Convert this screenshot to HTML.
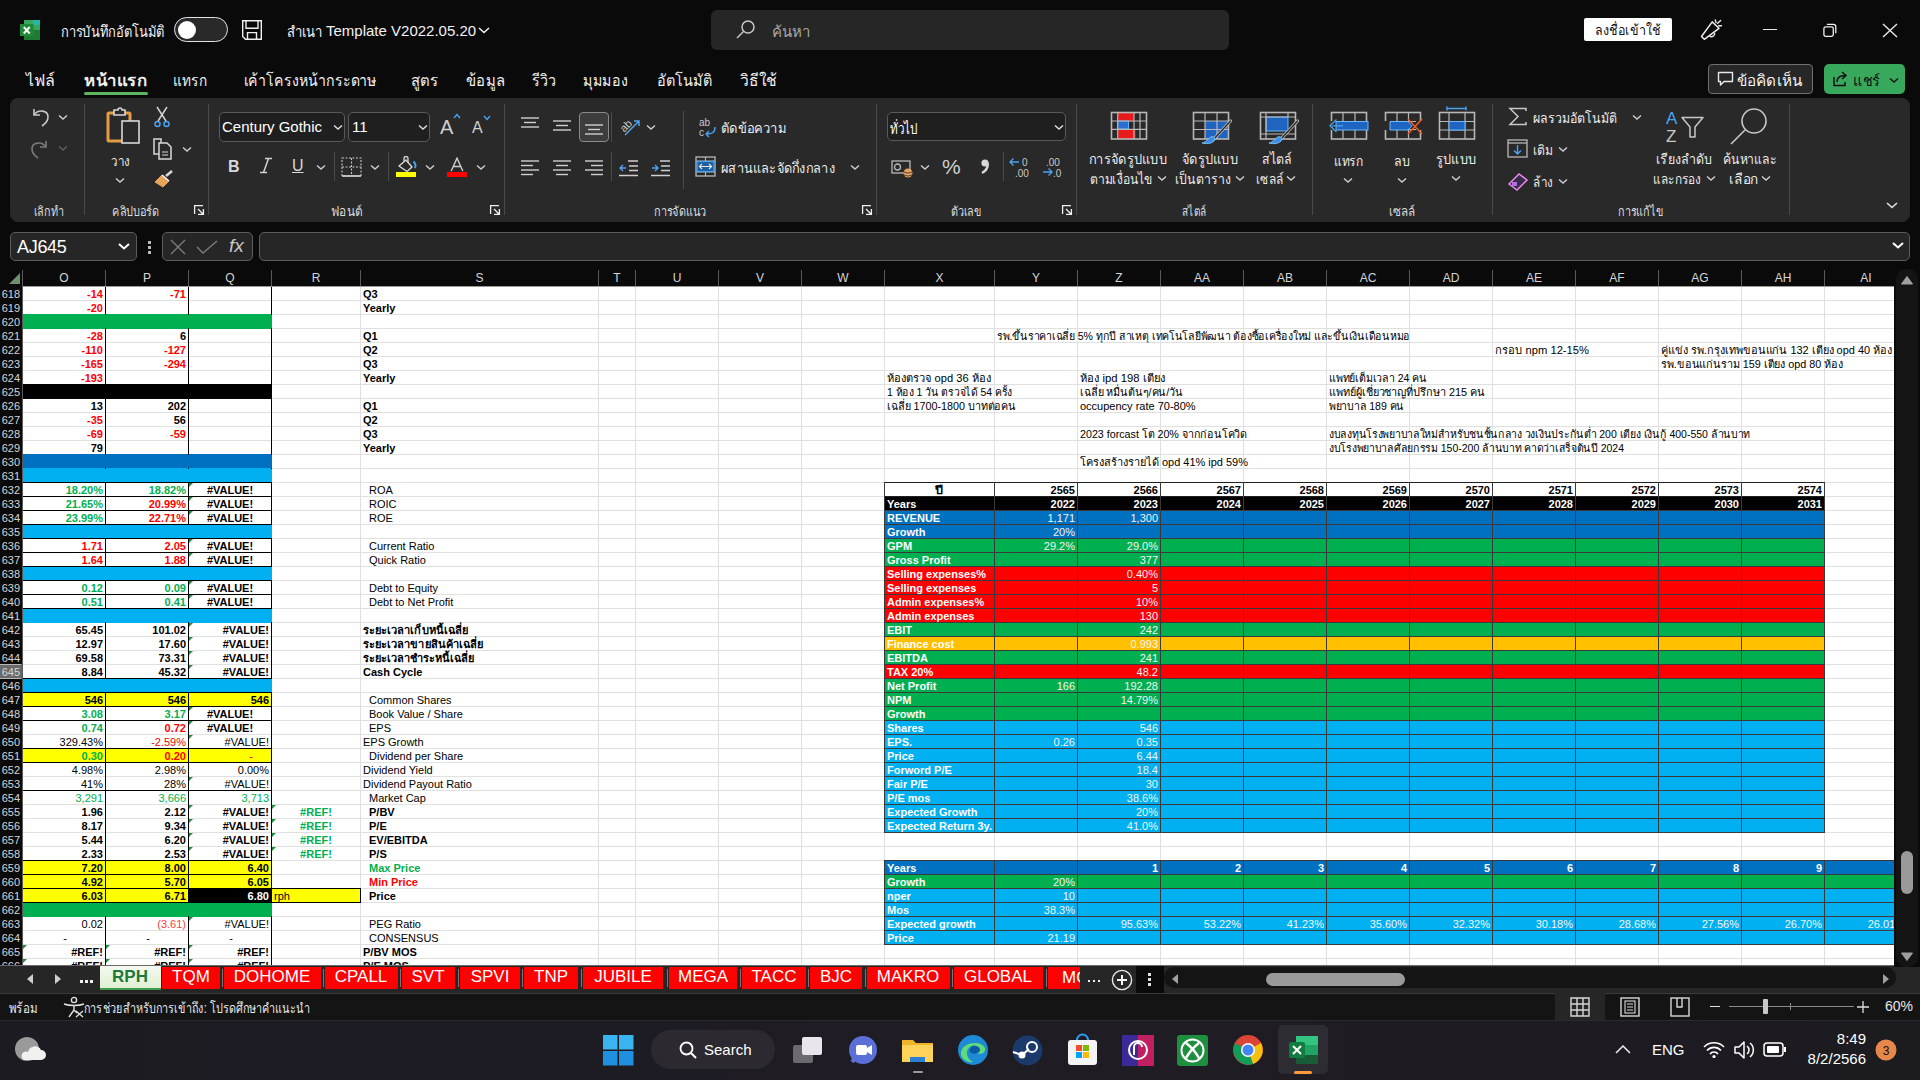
<!DOCTYPE html><html><head><meta charset="utf-8"><style>
*{margin:0;padding:0;box-sizing:border-box}
html,body{width:1920px;height:1080px;overflow:hidden;background:#0a0a0a;font-family:"Liberation Sans", sans-serif;position:relative}
.a{position:absolute}
.t{position:absolute;height:14px;line-height:14px;white-space:nowrap;font-size:11px}
#grid{position:absolute;left:0;top:0;width:1894px;height:965px;overflow:hidden;clip-path:inset(287px 0 0 23px)}
.hd{position:absolute;top:270px;height:17px;line-height:17px;text-align:center;color:#d6d6d6;font-size:12px}
.rn{position:absolute;left:0;width:21px;height:14px;line-height:14px;text-align:right;color:#d6d6d6;font-size:11px;padding-right:1px}

</style></head><body>
<div class="a" style="left:23px;top:287px;width:1871px;height:678px;background:#fff repeating-linear-gradient(to bottom, transparent 0, transparent 13px, #e0e0e0 13px, #e0e0e0 14px)"></div>
<div id="grid"><div style="position:absolute;left:105px;top:287px;width:1px;height:678px;background:#e0e0e0"></div><div style="position:absolute;left:188px;top:287px;width:1px;height:678px;background:#e0e0e0"></div><div style="position:absolute;left:271px;top:287px;width:1px;height:678px;background:#e0e0e0"></div><div style="position:absolute;left:360px;top:287px;width:1px;height:678px;background:#e0e0e0"></div><div style="position:absolute;left:598px;top:287px;width:1px;height:678px;background:#e0e0e0"></div><div style="position:absolute;left:635px;top:287px;width:1px;height:678px;background:#e0e0e0"></div><div style="position:absolute;left:718px;top:287px;width:1px;height:678px;background:#e0e0e0"></div><div style="position:absolute;left:801px;top:287px;width:1px;height:678px;background:#e0e0e0"></div><div style="position:absolute;left:884px;top:287px;width:1px;height:678px;background:#e0e0e0"></div><div style="position:absolute;left:994px;top:287px;width:1px;height:678px;background:#e0e0e0"></div><div style="position:absolute;left:1077px;top:287px;width:1px;height:678px;background:#e0e0e0"></div><div style="position:absolute;left:1160px;top:287px;width:1px;height:678px;background:#e0e0e0"></div><div style="position:absolute;left:1243px;top:287px;width:1px;height:678px;background:#e0e0e0"></div><div style="position:absolute;left:1326px;top:287px;width:1px;height:678px;background:#e0e0e0"></div><div style="position:absolute;left:1409px;top:287px;width:1px;height:678px;background:#e0e0e0"></div><div style="position:absolute;left:1492px;top:287px;width:1px;height:678px;background:#e0e0e0"></div><div style="position:absolute;left:1575px;top:287px;width:1px;height:678px;background:#e0e0e0"></div><div style="position:absolute;left:1658px;top:287px;width:1px;height:678px;background:#e0e0e0"></div><div style="position:absolute;left:1741px;top:287px;width:1px;height:678px;background:#e0e0e0"></div><div style="position:absolute;left:1824px;top:287px;width:1px;height:678px;background:#e0e0e0"></div><div style="position:absolute;left:23px;top:314px;width:249px;height:15px;background:#00b050;"></div><div style="position:absolute;left:23px;top:384px;width:249px;height:15px;background:#000000;"></div><div style="position:absolute;left:23px;top:454px;width:249px;height:15px;background:#0070c0;"></div><div style="position:absolute;left:23px;top:468px;width:249px;height:15px;background:#00b0f0;"></div><div style="position:absolute;left:23px;top:524px;width:249px;height:15px;background:#00b0f0;"></div><div style="position:absolute;left:23px;top:566px;width:249px;height:15px;background:#00b0f0;"></div><div style="position:absolute;left:23px;top:608px;width:249px;height:15px;background:#00b0f0;"></div><div style="position:absolute;left:23px;top:678px;width:249px;height:15px;background:#00b0f0;"></div><div style="position:absolute;left:23px;top:692px;width:249px;height:15px;background:#ffff00;"></div><div style="position:absolute;left:23px;top:748px;width:249px;height:15px;background:#ffff00;"></div><div style="position:absolute;left:23px;top:860px;width:249px;height:29px;background:#ffff00;"></div><div style="position:absolute;left:23px;top:888px;width:166px;height:15px;background:#ffff00;"></div><div style="position:absolute;left:188px;top:888px;width:84px;height:15px;background:#000000;"></div><div style="position:absolute;left:271px;top:888px;width:90px;height:15px;background:#ffff00;"></div><div style="position:absolute;left:23px;top:902px;width:249px;height:15px;background:#00b050;"></div><div style="position:absolute;left:22px;top:482px;width:250px;height:1px;background:#000000;"></div><div style="position:absolute;left:22px;top:496px;width:250px;height:1px;background:#000000;"></div><div style="position:absolute;left:22px;top:510px;width:250px;height:1px;background:#000000;"></div><div style="position:absolute;left:22px;top:524px;width:250px;height:1px;background:#000000;"></div><div style="position:absolute;left:22px;top:538px;width:250px;height:1px;background:#000000;"></div><div style="position:absolute;left:22px;top:552px;width:250px;height:1px;background:#000000;"></div><div style="position:absolute;left:22px;top:566px;width:250px;height:1px;background:#000000;"></div><div style="position:absolute;left:22px;top:580px;width:250px;height:1px;background:#000000;"></div><div style="position:absolute;left:22px;top:594px;width:250px;height:1px;background:#000000;"></div><div style="position:absolute;left:22px;top:608px;width:250px;height:1px;background:#000000;"></div><div style="position:absolute;left:22px;top:678px;width:250px;height:1px;background:#000000;"></div><div style="position:absolute;left:22px;top:692px;width:250px;height:1px;background:#000000;"></div><div style="position:absolute;left:22px;top:706px;width:250px;height:1px;background:#000000;"></div><div style="position:absolute;left:22px;top:720px;width:250px;height:1px;background:#000000;"></div><div style="position:absolute;left:22px;top:748px;width:250px;height:1px;background:#000000;"></div><div style="position:absolute;left:22px;top:762px;width:250px;height:1px;background:#000000;"></div><div style="position:absolute;left:22px;top:790px;width:250px;height:1px;background:#000000;"></div><div style="position:absolute;left:22px;top:860px;width:250px;height:1px;background:#000000;"></div><div style="position:absolute;left:22px;top:874px;width:250px;height:1px;background:#000000;"></div><div style="position:absolute;left:22px;top:888px;width:250px;height:1px;background:#000000;"></div><div style="position:absolute;left:22px;top:902px;width:250px;height:1px;background:#000000;"></div><div style="position:absolute;left:271px;top:888px;width:90px;height:1px;background:#000000;"></div><div style="position:absolute;left:271px;top:902px;width:90px;height:1px;background:#000000;"></div><div style="position:absolute;left:105px;top:286px;width:1px;height:687px;background:#000000;"></div><div style="position:absolute;left:188px;top:286px;width:1px;height:687px;background:#000000;"></div><div style="position:absolute;left:271px;top:286px;width:1px;height:687px;background:#000000;"></div><div style="position:absolute;left:360px;top:888px;width:1px;height:15px;background:#000000;"></div><div style="position:absolute;left:23px;top:315px;width:249px;height:13px;background:#00b050;"></div><div style="position:absolute;left:23px;top:385px;width:249px;height:13px;background:#000000;"></div><div style="position:absolute;left:23px;top:455px;width:249px;height:13px;background:#0070c0;"></div><div style="position:absolute;left:23px;top:469px;width:249px;height:13px;background:#00b0f0;"></div><div style="position:absolute;left:23px;top:525px;width:249px;height:13px;background:#00b0f0;"></div><div style="position:absolute;left:23px;top:567px;width:249px;height:13px;background:#00b0f0;"></div><div style="position:absolute;left:23px;top:609px;width:249px;height:13px;background:#00b0f0;"></div><div style="position:absolute;left:23px;top:679px;width:249px;height:13px;background:#00b0f0;"></div><div style="position:absolute;left:23px;top:903px;width:249px;height:13px;background:#00b050;"></div><div class="t" style="left:23px;width:80px;text-align:right;top:287px;color:#ff0000;font-weight:bold;font-size:11px;">-14</div><div class="t" style="left:106px;width:80px;text-align:right;top:287px;color:#ff0000;font-weight:bold;font-size:11px;">-71</div><div class="t" style="left:23px;width:80px;text-align:right;top:301px;color:#ff0000;font-weight:bold;font-size:11px;">-20</div><div class="t" style="left:23px;width:80px;text-align:right;top:329px;color:#ff0000;font-weight:bold;font-size:11px;">-28</div><div class="t" style="left:106px;width:80px;text-align:right;top:329px;color:#000;font-weight:bold;font-size:11px;">6</div><div class="t" style="left:23px;width:80px;text-align:right;top:343px;color:#ff0000;font-weight:bold;font-size:11px;">-110</div><div class="t" style="left:106px;width:80px;text-align:right;top:343px;color:#ff0000;font-weight:bold;font-size:11px;">-127</div><div class="t" style="left:23px;width:80px;text-align:right;top:357px;color:#ff0000;font-weight:bold;font-size:11px;">-165</div><div class="t" style="left:106px;width:80px;text-align:right;top:357px;color:#ff0000;font-weight:bold;font-size:11px;">-294</div><div class="t" style="left:23px;width:80px;text-align:right;top:371px;color:#ff0000;font-weight:bold;font-size:11px;">-193</div><div class="t" style="left:23px;width:80px;text-align:right;top:399px;color:#000;font-weight:bold;font-size:11px;">13</div><div class="t" style="left:106px;width:80px;text-align:right;top:399px;color:#000;font-weight:bold;font-size:11px;">202</div><div class="t" style="left:23px;width:80px;text-align:right;top:413px;color:#ff0000;font-weight:bold;font-size:11px;">-35</div><div class="t" style="left:106px;width:80px;text-align:right;top:413px;color:#000;font-weight:bold;font-size:11px;">56</div><div class="t" style="left:23px;width:80px;text-align:right;top:427px;color:#ff0000;font-weight:bold;font-size:11px;">-69</div><div class="t" style="left:106px;width:80px;text-align:right;top:427px;color:#ff0000;font-weight:bold;font-size:11px;">-59</div><div class="t" style="left:23px;width:80px;text-align:right;top:441px;color:#000;font-weight:bold;font-size:11px;">79</div><div class="t" style="left:23px;width:80px;text-align:right;top:483px;color:#00b050;font-weight:bold;font-size:11px;">18.20%</div><div class="t" style="left:106px;width:80px;text-align:right;top:483px;color:#00b050;font-weight:bold;font-size:11px;">18.82%</div><div class="t" style="left:189px;width:82px;text-align:center;top:483px;color:#000;font-weight:bold;font-size:11px;">#VALUE!</div><div class="t" style="left:23px;width:80px;text-align:right;top:497px;color:#00b050;font-weight:bold;font-size:11px;">21.65%</div><div class="t" style="left:106px;width:80px;text-align:right;top:497px;color:#ff0000;font-weight:bold;font-size:11px;">20.99%</div><div class="t" style="left:189px;width:82px;text-align:center;top:497px;color:#000;font-weight:bold;font-size:11px;">#VALUE!</div><div class="t" style="left:23px;width:80px;text-align:right;top:511px;color:#00b050;font-weight:bold;font-size:11px;">23.99%</div><div class="t" style="left:106px;width:80px;text-align:right;top:511px;color:#ff0000;font-weight:bold;font-size:11px;">22.71%</div><div class="t" style="left:189px;width:82px;text-align:center;top:511px;color:#000;font-weight:bold;font-size:11px;">#VALUE!</div><div class="t" style="left:23px;width:80px;text-align:right;top:539px;color:#ff0000;font-weight:bold;font-size:11px;">1.71</div><div class="t" style="left:106px;width:80px;text-align:right;top:539px;color:#ff0000;font-weight:bold;font-size:11px;">2.05</div><div class="t" style="left:189px;width:82px;text-align:center;top:539px;color:#000;font-weight:bold;font-size:11px;">#VALUE!</div><div class="t" style="left:23px;width:80px;text-align:right;top:553px;color:#ff0000;font-weight:bold;font-size:11px;">1.64</div><div class="t" style="left:106px;width:80px;text-align:right;top:553px;color:#ff0000;font-weight:bold;font-size:11px;">1.88</div><div class="t" style="left:189px;width:82px;text-align:center;top:553px;color:#000;font-weight:bold;font-size:11px;">#VALUE!</div><div class="t" style="left:23px;width:80px;text-align:right;top:581px;color:#00b050;font-weight:bold;font-size:11px;">0.12</div><div class="t" style="left:106px;width:80px;text-align:right;top:581px;color:#00b050;font-weight:bold;font-size:11px;">0.09</div><div class="t" style="left:189px;width:82px;text-align:center;top:581px;color:#000;font-weight:bold;font-size:11px;">#VALUE!</div><div class="t" style="left:23px;width:80px;text-align:right;top:595px;color:#00b050;font-weight:bold;font-size:11px;">0.51</div><div class="t" style="left:106px;width:80px;text-align:right;top:595px;color:#00b050;font-weight:bold;font-size:11px;">0.41</div><div class="t" style="left:189px;width:82px;text-align:center;top:595px;color:#000;font-weight:bold;font-size:11px;">#VALUE!</div><div class="t" style="left:23px;width:80px;text-align:right;top:623px;color:#000;font-weight:bold;font-size:11px;">65.45</div><div class="t" style="left:106px;width:80px;text-align:right;top:623px;color:#000;font-weight:bold;font-size:11px;">101.02</div><div class="t" style="left:189px;width:80px;text-align:right;top:623px;color:#000;font-weight:bold;font-size:11px;">#VALUE!</div><div class="t" style="left:23px;width:80px;text-align:right;top:637px;color:#000;font-weight:bold;font-size:11px;">12.97</div><div class="t" style="left:106px;width:80px;text-align:right;top:637px;color:#000;font-weight:bold;font-size:11px;">17.60</div><div class="t" style="left:189px;width:80px;text-align:right;top:637px;color:#000;font-weight:bold;font-size:11px;">#VALUE!</div><div class="t" style="left:23px;width:80px;text-align:right;top:651px;color:#000;font-weight:bold;font-size:11px;">69.58</div><div class="t" style="left:106px;width:80px;text-align:right;top:651px;color:#000;font-weight:bold;font-size:11px;">73.31</div><div class="t" style="left:189px;width:80px;text-align:right;top:651px;color:#000;font-weight:bold;font-size:11px;">#VALUE!</div><div class="t" style="left:23px;width:80px;text-align:right;top:665px;color:#000;font-weight:bold;font-size:11px;">8.84</div><div class="t" style="left:106px;width:80px;text-align:right;top:665px;color:#000;font-weight:bold;font-size:11px;">45.32</div><div class="t" style="left:189px;width:80px;text-align:right;top:665px;color:#000;font-weight:bold;font-size:11px;">#VALUE!</div><div class="t" style="left:23px;width:80px;text-align:right;top:693px;color:#000;font-weight:bold;font-size:11px;">546</div><div class="t" style="left:106px;width:80px;text-align:right;top:693px;color:#000;font-weight:bold;font-size:11px;">546</div><div class="t" style="left:189px;width:80px;text-align:right;top:693px;color:#000;font-weight:bold;font-size:11px;">546</div><div class="t" style="left:23px;width:80px;text-align:right;top:707px;color:#00b050;font-weight:bold;font-size:11px;">3.08</div><div class="t" style="left:106px;width:80px;text-align:right;top:707px;color:#00b050;font-weight:bold;font-size:11px;">3.17</div><div class="t" style="left:189px;width:82px;text-align:center;top:707px;color:#000;font-weight:bold;font-size:11px;">#VALUE!</div><div class="t" style="left:23px;width:80px;text-align:right;top:721px;color:#00b050;font-weight:bold;font-size:11px;">0.74</div><div class="t" style="left:106px;width:80px;text-align:right;top:721px;color:#ff0000;font-weight:bold;font-size:11px;">0.72</div><div class="t" style="left:189px;width:82px;text-align:center;top:721px;color:#000;font-weight:bold;font-size:11px;">#VALUE!</div><div class="t" style="left:23px;width:80px;text-align:right;top:735px;color:#000;font-weight:normal;font-size:11px;">329.43%</div><div class="t" style="left:106px;width:80px;text-align:right;top:735px;color:#ff0000;font-weight:normal;font-size:11px;">-2.59%</div><div class="t" style="left:189px;width:80px;text-align:right;top:735px;color:#000;font-weight:normal;font-size:11px;">#VALUE!</div><div class="t" style="left:23px;width:80px;text-align:right;top:749px;color:#00b050;font-weight:bold;font-size:11px;">0.30</div><div class="t" style="left:106px;width:80px;text-align:right;top:749px;color:#ff0000;font-weight:bold;font-size:11px;">0.20</div><div class="t" style="left:189px;width:64px;text-align:right;top:749px;color:#ff0000;font-weight:normal;font-size:11px;">-</div><div class="t" style="left:23px;width:80px;text-align:right;top:763px;color:#000;font-weight:normal;font-size:11px;">4.98%</div><div class="t" style="left:106px;width:80px;text-align:right;top:763px;color:#000;font-weight:normal;font-size:11px;">2.98%</div><div class="t" style="left:189px;width:80px;text-align:right;top:763px;color:#000;font-weight:normal;font-size:11px;">0.00%</div><div class="t" style="left:23px;width:80px;text-align:right;top:777px;color:#000;font-weight:normal;font-size:11px;">41%</div><div class="t" style="left:106px;width:80px;text-align:right;top:777px;color:#000;font-weight:normal;font-size:11px;">28%</div><div class="t" style="left:189px;width:80px;text-align:right;top:777px;color:#000;font-weight:normal;font-size:11px;">#VALUE!</div><div class="t" style="left:23px;width:80px;text-align:right;top:791px;color:#00b050;font-weight:normal;font-size:11px;">3,291</div><div class="t" style="left:106px;width:80px;text-align:right;top:791px;color:#00b050;font-weight:normal;font-size:11px;">3,666</div><div class="t" style="left:189px;width:80px;text-align:right;top:791px;color:#00b050;font-weight:normal;font-size:11px;">3,713</div><div class="t" style="left:23px;width:80px;text-align:right;top:805px;color:#000;font-weight:bold;font-size:11px;">1.96</div><div class="t" style="left:106px;width:80px;text-align:right;top:805px;color:#000;font-weight:bold;font-size:11px;">2.12</div><div class="t" style="left:189px;width:80px;text-align:right;top:805px;color:#000;font-weight:bold;font-size:11px;">#VALUE!</div><div class="t" style="left:272px;width:88px;text-align:center;top:805px;color:#00b050;font-weight:bold;font-size:11px;">#REF!</div><div class="t" style="left:23px;width:80px;text-align:right;top:819px;color:#000;font-weight:bold;font-size:11px;">8.17</div><div class="t" style="left:106px;width:80px;text-align:right;top:819px;color:#000;font-weight:bold;font-size:11px;">9.34</div><div class="t" style="left:189px;width:80px;text-align:right;top:819px;color:#000;font-weight:bold;font-size:11px;">#VALUE!</div><div class="t" style="left:272px;width:88px;text-align:center;top:819px;color:#00b050;font-weight:bold;font-size:11px;">#REF!</div><div class="t" style="left:23px;width:80px;text-align:right;top:833px;color:#000;font-weight:bold;font-size:11px;">5.44</div><div class="t" style="left:106px;width:80px;text-align:right;top:833px;color:#000;font-weight:bold;font-size:11px;">6.20</div><div class="t" style="left:189px;width:80px;text-align:right;top:833px;color:#000;font-weight:bold;font-size:11px;">#VALUE!</div><div class="t" style="left:272px;width:88px;text-align:center;top:833px;color:#00b050;font-weight:bold;font-size:11px;">#REF!</div><div class="t" style="left:23px;width:80px;text-align:right;top:847px;color:#000;font-weight:bold;font-size:11px;">2.33</div><div class="t" style="left:106px;width:80px;text-align:right;top:847px;color:#000;font-weight:bold;font-size:11px;">2.53</div><div class="t" style="left:189px;width:80px;text-align:right;top:847px;color:#000;font-weight:bold;font-size:11px;">#VALUE!</div><div class="t" style="left:272px;width:88px;text-align:center;top:847px;color:#00b050;font-weight:bold;font-size:11px;">#REF!</div><div class="t" style="left:23px;width:80px;text-align:right;top:861px;color:#000;font-weight:bold;font-size:11px;">7.20</div><div class="t" style="left:106px;width:80px;text-align:right;top:861px;color:#000;font-weight:bold;font-size:11px;">8.00</div><div class="t" style="left:189px;width:80px;text-align:right;top:861px;color:#000;font-weight:bold;font-size:11px;">6.40</div><div class="t" style="left:23px;width:80px;text-align:right;top:875px;color:#000;font-weight:bold;font-size:11px;">4.92</div><div class="t" style="left:106px;width:80px;text-align:right;top:875px;color:#000;font-weight:bold;font-size:11px;">5.70</div><div class="t" style="left:189px;width:80px;text-align:right;top:875px;color:#000;font-weight:bold;font-size:11px;">6.05</div><div class="t" style="left:23px;width:80px;text-align:right;top:889px;color:#000;font-weight:bold;font-size:11px;">6.03</div><div class="t" style="left:106px;width:80px;text-align:right;top:889px;color:#000;font-weight:bold;font-size:11px;">6.71</div><div class="t" style="left:189px;width:80px;text-align:right;top:889px;color:#fff;font-weight:bold;font-size:11px;">6.80</div><div class="t" style="left:274px;top:889px;color:#000;font-weight:normal;font-size:11px;">rph</div><div class="t" style="left:23px;width:80px;text-align:right;top:917px;color:#000;font-weight:normal;font-size:11px;">0.02</div><div class="t" style="left:106px;width:80px;text-align:right;top:917px;color:#ff4040;font-weight:normal;font-size:11px;">(3.61)</div><div class="t" style="left:189px;width:80px;text-align:right;top:917px;color:#000;font-weight:normal;font-size:11px;">#VALUE!</div><div class="t" style="left:23px;width:44px;text-align:right;top:931px;color:#000;font-weight:normal;font-size:11px;">-</div><div class="t" style="left:106px;width:44px;text-align:right;top:931px;color:#000;font-weight:normal;font-size:11px;">-</div><div class="t" style="left:189px;width:44px;text-align:right;top:931px;color:#000;font-weight:normal;font-size:11px;">-</div><div class="t" style="left:23px;width:80px;text-align:right;top:945px;color:#000;font-weight:bold;font-size:11px;">#REF!</div><div class="t" style="left:23px;width:80px;text-align:right;top:959px;color:#000;font-weight:bold;font-size:11px;">#REF!</div><div class="t" style="left:106px;width:80px;text-align:right;top:945px;color:#000;font-weight:bold;font-size:11px;">#REF!</div><div class="t" style="left:106px;width:80px;text-align:right;top:959px;color:#000;font-weight:bold;font-size:11px;">#REF!</div><div class="t" style="left:189px;width:80px;text-align:right;top:945px;color:#000;font-weight:bold;font-size:11px;">#REF!</div><div class="t" style="left:189px;width:80px;text-align:right;top:959px;color:#000;font-weight:bold;font-size:11px;">#REF!</div><div style="position:absolute;left:189px;top:483px;width:0;height:0;border-top:4px solid #1e8f3e;border-right:4px solid transparent"></div><div style="position:absolute;left:189px;top:497px;width:0;height:0;border-top:4px solid #1e8f3e;border-right:4px solid transparent"></div><div style="position:absolute;left:189px;top:511px;width:0;height:0;border-top:4px solid #1e8f3e;border-right:4px solid transparent"></div><div style="position:absolute;left:189px;top:539px;width:0;height:0;border-top:4px solid #1e8f3e;border-right:4px solid transparent"></div><div style="position:absolute;left:189px;top:553px;width:0;height:0;border-top:4px solid #1e8f3e;border-right:4px solid transparent"></div><div style="position:absolute;left:189px;top:581px;width:0;height:0;border-top:4px solid #1e8f3e;border-right:4px solid transparent"></div><div style="position:absolute;left:189px;top:595px;width:0;height:0;border-top:4px solid #1e8f3e;border-right:4px solid transparent"></div><div style="position:absolute;left:189px;top:623px;width:0;height:0;border-top:4px solid #1e8f3e;border-right:4px solid transparent"></div><div style="position:absolute;left:189px;top:637px;width:0;height:0;border-top:4px solid #1e8f3e;border-right:4px solid transparent"></div><div style="position:absolute;left:189px;top:651px;width:0;height:0;border-top:4px solid #1e8f3e;border-right:4px solid transparent"></div><div style="position:absolute;left:189px;top:665px;width:0;height:0;border-top:4px solid #1e8f3e;border-right:4px solid transparent"></div><div style="position:absolute;left:189px;top:707px;width:0;height:0;border-top:4px solid #1e8f3e;border-right:4px solid transparent"></div><div style="position:absolute;left:189px;top:721px;width:0;height:0;border-top:4px solid #1e8f3e;border-right:4px solid transparent"></div><div style="position:absolute;left:189px;top:735px;width:0;height:0;border-top:4px solid #1e8f3e;border-right:4px solid transparent"></div><div style="position:absolute;left:189px;top:777px;width:0;height:0;border-top:4px solid #1e8f3e;border-right:4px solid transparent"></div><div style="position:absolute;left:189px;top:805px;width:0;height:0;border-top:4px solid #1e8f3e;border-right:4px solid transparent"></div><div style="position:absolute;left:189px;top:819px;width:0;height:0;border-top:4px solid #1e8f3e;border-right:4px solid transparent"></div><div style="position:absolute;left:189px;top:833px;width:0;height:0;border-top:4px solid #1e8f3e;border-right:4px solid transparent"></div><div style="position:absolute;left:189px;top:847px;width:0;height:0;border-top:4px solid #1e8f3e;border-right:4px solid transparent"></div><div style="position:absolute;left:189px;top:917px;width:0;height:0;border-top:4px solid #1e8f3e;border-right:4px solid transparent"></div><div style="position:absolute;left:189px;top:945px;width:0;height:0;border-top:4px solid #1e8f3e;border-right:4px solid transparent"></div><div style="position:absolute;left:189px;top:959px;width:0;height:0;border-top:4px solid #1e8f3e;border-right:4px solid transparent"></div><div style="position:absolute;left:272px;top:805px;width:0;height:0;border-top:4px solid #1e8f3e;border-right:4px solid transparent"></div><div style="position:absolute;left:272px;top:819px;width:0;height:0;border-top:4px solid #1e8f3e;border-right:4px solid transparent"></div><div style="position:absolute;left:272px;top:833px;width:0;height:0;border-top:4px solid #1e8f3e;border-right:4px solid transparent"></div><div style="position:absolute;left:272px;top:847px;width:0;height:0;border-top:4px solid #1e8f3e;border-right:4px solid transparent"></div><div style="position:absolute;left:23px;top:945px;width:0;height:0;border-top:4px solid #1e8f3e;border-right:4px solid transparent"></div><div style="position:absolute;left:106px;top:945px;width:0;height:0;border-top:4px solid #1e8f3e;border-right:4px solid transparent"></div><div style="position:absolute;left:23px;top:959px;width:0;height:0;border-top:4px solid #1e8f3e;border-right:4px solid transparent"></div><div style="position:absolute;left:106px;top:959px;width:0;height:0;border-top:4px solid #1e8f3e;border-right:4px solid transparent"></div><div class="t" style="left:363px;top:287px;color:#000;font-weight:bold;font-size:11px;">Q3</div><div class="t" style="left:363px;top:301px;color:#000;font-weight:bold;font-size:11px;">Yearly</div><div class="t" style="left:363px;top:329px;color:#000;font-weight:bold;font-size:11px;">Q1</div><div class="t" style="left:363px;top:343px;color:#000;font-weight:bold;font-size:11px;">Q2</div><div class="t" style="left:363px;top:357px;color:#000;font-weight:bold;font-size:11px;">Q3</div><div class="t" style="left:363px;top:371px;color:#000;font-weight:bold;font-size:11px;">Yearly</div><div class="t" style="left:363px;top:399px;color:#000;font-weight:bold;font-size:11px;">Q1</div><div class="t" style="left:363px;top:413px;color:#000;font-weight:bold;font-size:11px;">Q2</div><div class="t" style="left:363px;top:427px;color:#000;font-weight:bold;font-size:11px;">Q3</div><div class="t" style="left:363px;top:441px;color:#000;font-weight:bold;font-size:11px;">Yearly</div><div class="t" style="left:369px;top:483px;color:#000;font-weight:normal;font-size:11px;">ROA</div><div class="t" style="left:369px;top:497px;color:#000;font-weight:normal;font-size:11px;">ROIC</div><div class="t" style="left:369px;top:511px;color:#000;font-weight:normal;font-size:11px;">ROE</div><div class="t" style="left:369px;top:539px;color:#000;font-weight:normal;font-size:11px;">Current Ratio</div><div class="t" style="left:369px;top:553px;color:#000;font-weight:normal;font-size:11px;">Quick Ratio</div><div class="t" style="left:369px;top:581px;color:#000;font-weight:normal;font-size:11px;">Debt to Equity</div><div class="t" style="left:369px;top:595px;color:#000;font-weight:normal;font-size:11px;">Debt to Net Profit</div><svg style="position:absolute;left:363px;top:623px;overflow:visible" width="105" height="14"><text x="0" y="11" textLength="105" lengthAdjust="spacingAndGlyphs" font-family="Liberation Sans" font-size="11" fill="#000" font-weight="bold">ระยะเวลาเก็บหนี้เฉลี่ย</text></svg><svg style="position:absolute;left:363px;top:637px;overflow:visible" width="120" height="14"><text x="0" y="11" textLength="120" lengthAdjust="spacingAndGlyphs" font-family="Liberation Sans" font-size="11" fill="#000" font-weight="bold">ระยะเวลาขายสินค้าเฉลี่ย</text></svg><svg style="position:absolute;left:363px;top:651px;overflow:visible" width="111" height="14"><text x="0" y="11" textLength="111" lengthAdjust="spacingAndGlyphs" font-family="Liberation Sans" font-size="11" fill="#000" font-weight="bold">ระยะเวลาชำระหนี้เฉลี่ย</text></svg><div class="t" style="left:363px;top:665px;color:#000;font-weight:bold;font-size:11px;">Cash Cycle</div><div class="t" style="left:369px;top:693px;color:#000;font-weight:normal;font-size:11px;">Common Shares</div><div class="t" style="left:369px;top:707px;color:#000;font-weight:normal;font-size:11px;">Book Value / Share</div><div class="t" style="left:369px;top:721px;color:#000;font-weight:normal;font-size:11px;">EPS</div><div class="t" style="left:363px;top:735px;color:#000;font-weight:normal;font-size:11px;">EPS Growth</div><div class="t" style="left:369px;top:749px;color:#000;font-weight:normal;font-size:11px;">Dividend per Share</div><div class="t" style="left:363px;top:763px;color:#000;font-weight:normal;font-size:11px;">Dividend Yield</div><div class="t" style="left:363px;top:777px;color:#000;font-weight:normal;font-size:11px;">Dividend Payout Ratio</div><div class="t" style="left:369px;top:791px;color:#000;font-weight:normal;font-size:11px;">Market Cap</div><div class="t" style="left:369px;top:805px;color:#000;font-weight:bold;font-size:11px;">P/BV</div><div class="t" style="left:369px;top:819px;color:#000;font-weight:bold;font-size:11px;">P/E</div><div class="t" style="left:369px;top:833px;color:#000;font-weight:bold;font-size:11px;">EV/EBITDA</div><div class="t" style="left:369px;top:847px;color:#000;font-weight:bold;font-size:11px;">P/S</div><div class="t" style="left:369px;top:861px;color:#00b050;font-weight:bold;font-size:11px;">Max Price</div><div class="t" style="left:369px;top:875px;color:#ff0000;font-weight:bold;font-size:11px;">Min Price</div><div class="t" style="left:369px;top:889px;color:#000;font-weight:bold;font-size:11px;">Price</div><div class="t" style="left:369px;top:917px;color:#000;font-weight:normal;font-size:11px;">PEG Ratio</div><div class="t" style="left:369px;top:931px;color:#000;font-weight:normal;font-size:11px;">CONSENSUS</div><div class="t" style="left:363px;top:945px;color:#000;font-weight:bold;font-size:11px;">P/BV MOS</div><div class="t" style="left:363px;top:959px;color:#000;font-weight:bold;font-size:11px;">P/E MOS</div><svg style="position:absolute;left:997px;top:329px;overflow:visible" width="413" height="14"><text x="0" y="11" textLength="413" lengthAdjust="spacingAndGlyphs" font-family="Liberation Sans" font-size="11" fill="#000" font-weight="normal">รพ.ขึ้นราคาเฉลี่ย 5% ทุกปี สาเหตุ เทคโนโลยีพัฒนา ต้องซื้อเครื่องใหม่ และขึ้นเงินเดือนหมอ</text></svg><svg style="position:absolute;left:1495px;top:343px;overflow:visible" width="94" height="14"><text x="0" y="11" textLength="94" lengthAdjust="spacingAndGlyphs" font-family="Liberation Sans" font-size="11" fill="#000" font-weight="normal">กรอบ npm 12-15%</text></svg><svg style="position:absolute;left:1661px;top:343px;overflow:visible" width="231" height="14"><text x="0" y="11" textLength="231" lengthAdjust="spacingAndGlyphs" font-family="Liberation Sans" font-size="11" fill="#000" font-weight="normal">คู่แข่ง รพ.กรุงเทพขอนแก่น 132 เตียง opd 40 ห้อง</text></svg><svg style="position:absolute;left:1661px;top:357px;overflow:visible" width="182" height="14"><text x="0" y="11" textLength="182" lengthAdjust="spacingAndGlyphs" font-family="Liberation Sans" font-size="11" fill="#000" font-weight="normal">รพ.ขอนแก่นราม 159 เตียง opd 80 ห้อง</text></svg><svg style="position:absolute;left:887px;top:371px;overflow:visible" width="104" height="14"><text x="0" y="11" textLength="104" lengthAdjust="spacingAndGlyphs" font-family="Liberation Sans" font-size="11" fill="#000" font-weight="normal">ห้องตรวจ opd 36 ห้อง</text></svg><svg style="position:absolute;left:1080px;top:371px;overflow:visible" width="85" height="14"><text x="0" y="11" textLength="85" lengthAdjust="spacingAndGlyphs" font-family="Liberation Sans" font-size="11" fill="#000" font-weight="normal">ห้อง ipd 198 เตียง</text></svg><svg style="position:absolute;left:1329px;top:371px;overflow:visible" width="98" height="14"><text x="0" y="11" textLength="98" lengthAdjust="spacingAndGlyphs" font-family="Liberation Sans" font-size="11" fill="#000" font-weight="normal">แพทย์เต็มเวลา 24 คน</text></svg><svg style="position:absolute;left:887px;top:385px;overflow:visible" width="125" height="14"><text x="0" y="11" textLength="125" lengthAdjust="spacingAndGlyphs" font-family="Liberation Sans" font-size="11" fill="#000" font-weight="normal">1 ห้อง 1 วัน ตรวจได้ 54 ครั้ง</text></svg><svg style="position:absolute;left:1080px;top:385px;overflow:visible" width="103" height="14"><text x="0" y="11" textLength="103" lengthAdjust="spacingAndGlyphs" font-family="Liberation Sans" font-size="11" fill="#000" font-weight="normal">เฉลี่ย หมื่นต้นๆ/คน/วัน</text></svg><svg style="position:absolute;left:1329px;top:385px;overflow:visible" width="156" height="14"><text x="0" y="11" textLength="156" lengthAdjust="spacingAndGlyphs" font-family="Liberation Sans" font-size="11" fill="#000" font-weight="normal">แพทย์ผู้เชี่ยวชาญที่ปรึกษา 215 คน</text></svg><svg style="position:absolute;left:887px;top:399px;overflow:visible" width="129" height="14"><text x="0" y="11" textLength="129" lengthAdjust="spacingAndGlyphs" font-family="Liberation Sans" font-size="11" fill="#000" font-weight="normal">เฉลี่ย 1700-1800 บาทต่อคน</text></svg><div class="t" style="left:1080px;top:399px;color:#000;font-weight:normal;font-size:11px;">occupency rate 70-80%</div><svg style="position:absolute;left:1329px;top:399px;overflow:visible" width="75" height="14"><text x="0" y="11" textLength="75" lengthAdjust="spacingAndGlyphs" font-family="Liberation Sans" font-size="11" fill="#000" font-weight="normal">พยาบาล 189 คน</text></svg><svg style="position:absolute;left:1080px;top:427px;overflow:visible" width="167" height="14"><text x="0" y="11" textLength="167" lengthAdjust="spacingAndGlyphs" font-family="Liberation Sans" font-size="11" fill="#000" font-weight="normal">2023 forcast โต 20% จากก่อนโควิด</text></svg><svg style="position:absolute;left:1329px;top:427px;overflow:visible" width="421" height="14"><text x="0" y="11" textLength="421" lengthAdjust="spacingAndGlyphs" font-family="Liberation Sans" font-size="11" fill="#000" font-weight="normal">งบลงทุนโรงพยาบาลใหม่สำหรับชนชั้นกลาง วงเงินประกันต่ำ 200 เตียง เงินกู้ 400-550 ล้านบาท</text></svg><svg style="position:absolute;left:1329px;top:441px;overflow:visible" width="295" height="14"><text x="0" y="11" textLength="295" lengthAdjust="spacingAndGlyphs" font-family="Liberation Sans" font-size="11" fill="#000" font-weight="normal">งบโรงพยาบาลศัลยกรรม 150-200 ล้านบาท คาดว่าเสร็จต้นปี 2024</text></svg><svg style="position:absolute;left:1080px;top:455px;overflow:visible" width="168" height="14"><text x="0" y="11" textLength="168" lengthAdjust="spacingAndGlyphs" font-family="Liberation Sans" font-size="11" fill="#000" font-weight="normal">โครงสร้างรายได้ opd 41% ipd 59%</text></svg><div style="position:absolute;left:884px;top:496px;width:941px;height:15px;background:#000000;"></div><div style="position:absolute;left:884px;top:510px;width:941px;height:15px;background:#0070c0;"></div><div style="position:absolute;left:884px;top:524px;width:941px;height:15px;background:#0070c0;"></div><div style="position:absolute;left:884px;top:538px;width:941px;height:15px;background:#00b050;"></div><div style="position:absolute;left:884px;top:552px;width:941px;height:15px;background:#00b050;"></div><div style="position:absolute;left:884px;top:566px;width:941px;height:15px;background:#ff0000;"></div><div style="position:absolute;left:884px;top:580px;width:941px;height:15px;background:#ff0000;"></div><div style="position:absolute;left:884px;top:594px;width:941px;height:15px;background:#ff0000;"></div><div style="position:absolute;left:884px;top:608px;width:941px;height:15px;background:#ff0000;"></div><div style="position:absolute;left:884px;top:622px;width:941px;height:15px;background:#00b050;"></div><div style="position:absolute;left:884px;top:636px;width:941px;height:15px;background:#ffc000;"></div><div style="position:absolute;left:884px;top:650px;width:941px;height:15px;background:#00b050;"></div><div style="position:absolute;left:884px;top:664px;width:941px;height:15px;background:#ff0000;"></div><div style="position:absolute;left:884px;top:678px;width:941px;height:15px;background:#00b050;"></div><div style="position:absolute;left:884px;top:692px;width:941px;height:15px;background:#00b050;"></div><div style="position:absolute;left:884px;top:706px;width:941px;height:15px;background:#00b050;"></div><div style="position:absolute;left:884px;top:720px;width:941px;height:15px;background:#00b0f0;"></div><div style="position:absolute;left:884px;top:734px;width:941px;height:15px;background:#00b0f0;"></div><div style="position:absolute;left:884px;top:748px;width:941px;height:15px;background:#00b0f0;"></div><div style="position:absolute;left:884px;top:762px;width:941px;height:15px;background:#00b0f0;"></div><div style="position:absolute;left:884px;top:776px;width:941px;height:15px;background:#00b0f0;"></div><div style="position:absolute;left:884px;top:790px;width:941px;height:15px;background:#00b0f0;"></div><div style="position:absolute;left:884px;top:804px;width:941px;height:15px;background:#00b0f0;"></div><div style="position:absolute;left:884px;top:818px;width:941px;height:15px;background:#00b0f0;"></div><div style="position:absolute;left:884px;top:482px;width:941px;height:1px;background:#202020;"></div><div style="position:absolute;left:884px;top:496px;width:941px;height:1px;background:#202020;"></div><div style="position:absolute;left:884px;top:510px;width:941px;height:1px;background:#3a3a3a;"></div><div style="position:absolute;left:884px;top:524px;width:941px;height:1px;background:#3a3a3a;"></div><div style="position:absolute;left:884px;top:538px;width:941px;height:1px;background:#3a3a3a;"></div><div style="position:absolute;left:884px;top:552px;width:941px;height:1px;background:#3a3a3a;"></div><div style="position:absolute;left:884px;top:566px;width:941px;height:1px;background:#3a3a3a;"></div><div style="position:absolute;left:884px;top:580px;width:941px;height:1px;background:#3a3a3a;"></div><div style="position:absolute;left:884px;top:594px;width:941px;height:1px;background:#3a3a3a;"></div><div style="position:absolute;left:884px;top:608px;width:941px;height:1px;background:#3a3a3a;"></div><div style="position:absolute;left:884px;top:622px;width:941px;height:1px;background:#3a3a3a;"></div><div style="position:absolute;left:884px;top:636px;width:941px;height:1px;background:#3a3a3a;"></div><div style="position:absolute;left:884px;top:650px;width:941px;height:1px;background:#3a3a3a;"></div><div style="position:absolute;left:884px;top:664px;width:941px;height:1px;background:#3a3a3a;"></div><div style="position:absolute;left:884px;top:678px;width:941px;height:1px;background:#3a3a3a;"></div><div style="position:absolute;left:884px;top:692px;width:941px;height:1px;background:#3a3a3a;"></div><div style="position:absolute;left:884px;top:706px;width:941px;height:1px;background:#3a3a3a;"></div><div style="position:absolute;left:884px;top:720px;width:941px;height:1px;background:#3a3a3a;"></div><div style="position:absolute;left:884px;top:734px;width:941px;height:1px;background:#3a3a3a;"></div><div style="position:absolute;left:884px;top:748px;width:941px;height:1px;background:#3a3a3a;"></div><div style="position:absolute;left:884px;top:762px;width:941px;height:1px;background:#3a3a3a;"></div><div style="position:absolute;left:884px;top:776px;width:941px;height:1px;background:#3a3a3a;"></div><div style="position:absolute;left:884px;top:790px;width:941px;height:1px;background:#3a3a3a;"></div><div style="position:absolute;left:884px;top:804px;width:941px;height:1px;background:#3a3a3a;"></div><div style="position:absolute;left:884px;top:818px;width:941px;height:1px;background:#3a3a3a;"></div><div style="position:absolute;left:884px;top:832px;width:941px;height:1px;background:#3a3a3a;"></div><div style="position:absolute;left:884px;top:482px;width:1px;height:351px;background:#3a3a3a;"></div><div style="position:absolute;left:994px;top:482px;width:1px;height:351px;background:#3a3a3a;"></div><div style="position:absolute;left:1077px;top:482px;width:1px;height:351px;background:#3a3a3a;"></div><div style="position:absolute;left:1160px;top:482px;width:1px;height:351px;background:#3a3a3a;"></div><div style="position:absolute;left:1243px;top:482px;width:1px;height:351px;background:#3a3a3a;"></div><div style="position:absolute;left:1326px;top:482px;width:1px;height:351px;background:#3a3a3a;"></div><div style="position:absolute;left:1409px;top:482px;width:1px;height:351px;background:#3a3a3a;"></div><div style="position:absolute;left:1492px;top:482px;width:1px;height:351px;background:#3a3a3a;"></div><div style="position:absolute;left:1575px;top:482px;width:1px;height:351px;background:#3a3a3a;"></div><div style="position:absolute;left:1658px;top:482px;width:1px;height:351px;background:#3a3a3a;"></div><div style="position:absolute;left:1741px;top:482px;width:1px;height:351px;background:#3a3a3a;"></div><div style="position:absolute;left:1824px;top:482px;width:1px;height:351px;background:#3a3a3a;"></div><svg style="position:absolute;left:935px;top:483px;overflow:visible" width="8" height="14"><text x="0" y="11" textLength="8" lengthAdjust="spacingAndGlyphs" font-family="Liberation Sans" font-size="11" fill="#000" font-weight="bold">ปี</text></svg><div class="t" style="left:995px;width:80px;text-align:right;top:483px;color:#000;font-weight:bold;font-size:11px;">2565</div><div class="t" style="left:995px;width:80px;text-align:right;top:497px;color:#fff;font-weight:bold;font-size:11px;">2022</div><div class="t" style="left:1078px;width:80px;text-align:right;top:483px;color:#000;font-weight:bold;font-size:11px;">2566</div><div class="t" style="left:1078px;width:80px;text-align:right;top:497px;color:#fff;font-weight:bold;font-size:11px;">2023</div><div class="t" style="left:1161px;width:80px;text-align:right;top:483px;color:#000;font-weight:bold;font-size:11px;">2567</div><div class="t" style="left:1161px;width:80px;text-align:right;top:497px;color:#fff;font-weight:bold;font-size:11px;">2024</div><div class="t" style="left:1244px;width:80px;text-align:right;top:483px;color:#000;font-weight:bold;font-size:11px;">2568</div><div class="t" style="left:1244px;width:80px;text-align:right;top:497px;color:#fff;font-weight:bold;font-size:11px;">2025</div><div class="t" style="left:1327px;width:80px;text-align:right;top:483px;color:#000;font-weight:bold;font-size:11px;">2569</div><div class="t" style="left:1327px;width:80px;text-align:right;top:497px;color:#fff;font-weight:bold;font-size:11px;">2026</div><div class="t" style="left:1410px;width:80px;text-align:right;top:483px;color:#000;font-weight:bold;font-size:11px;">2570</div><div class="t" style="left:1410px;width:80px;text-align:right;top:497px;color:#fff;font-weight:bold;font-size:11px;">2027</div><div class="t" style="left:1493px;width:80px;text-align:right;top:483px;color:#000;font-weight:bold;font-size:11px;">2571</div><div class="t" style="left:1493px;width:80px;text-align:right;top:497px;color:#fff;font-weight:bold;font-size:11px;">2028</div><div class="t" style="left:1576px;width:80px;text-align:right;top:483px;color:#000;font-weight:bold;font-size:11px;">2572</div><div class="t" style="left:1576px;width:80px;text-align:right;top:497px;color:#fff;font-weight:bold;font-size:11px;">2029</div><div class="t" style="left:1659px;width:80px;text-align:right;top:483px;color:#000;font-weight:bold;font-size:11px;">2573</div><div class="t" style="left:1659px;width:80px;text-align:right;top:497px;color:#fff;font-weight:bold;font-size:11px;">2030</div><div class="t" style="left:1742px;width:80px;text-align:right;top:483px;color:#000;font-weight:bold;font-size:11px;">2574</div><div class="t" style="left:1742px;width:80px;text-align:right;top:497px;color:#fff;font-weight:bold;font-size:11px;">2031</div><div class="t" style="left:887px;top:497px;color:#fff;font-weight:bold;font-size:11px;">Years</div><div class="t" style="left:887px;top:511px;color:#fff;font-weight:bold;font-size:11px;">REVENUE</div><div class="t" style="left:995px;width:80px;text-align:right;top:511px;color:#f4f4f4;font-weight:normal;font-size:11px;">1,171</div><div class="t" style="left:1078px;width:80px;text-align:right;top:511px;color:#f4f4f4;font-weight:normal;font-size:11px;">1,300</div><div class="t" style="left:887px;top:525px;color:#fff;font-weight:bold;font-size:11px;">Growth</div><div class="t" style="left:995px;width:80px;text-align:right;top:525px;color:#f4f4f4;font-weight:normal;font-size:11px;">20%</div><div class="t" style="left:887px;top:539px;color:#fff;font-weight:bold;font-size:11px;">GPM</div><div class="t" style="left:995px;width:80px;text-align:right;top:539px;color:#f4f4f4;font-weight:normal;font-size:11px;">29.2%</div><div class="t" style="left:1078px;width:80px;text-align:right;top:539px;color:#f4f4f4;font-weight:normal;font-size:11px;">29.0%</div><div class="t" style="left:887px;top:553px;color:#fff;font-weight:bold;font-size:11px;">Gross Profit</div><div class="t" style="left:1078px;width:80px;text-align:right;top:553px;color:#f4f4f4;font-weight:normal;font-size:11px;">377</div><div class="t" style="left:887px;top:567px;color:#fff;font-weight:bold;font-size:11px;">Selling expenses%</div><div class="t" style="left:1078px;width:80px;text-align:right;top:567px;color:#f4f4f4;font-weight:normal;font-size:11px;">0.40%</div><div class="t" style="left:887px;top:581px;color:#fff;font-weight:bold;font-size:11px;">Selling expenses</div><div class="t" style="left:1078px;width:80px;text-align:right;top:581px;color:#f4f4f4;font-weight:normal;font-size:11px;">5</div><div class="t" style="left:887px;top:595px;color:#fff;font-weight:bold;font-size:11px;">Admin expenses%</div><div class="t" style="left:1078px;width:80px;text-align:right;top:595px;color:#f4f4f4;font-weight:normal;font-size:11px;">10%</div><div class="t" style="left:887px;top:609px;color:#fff;font-weight:bold;font-size:11px;">Admin expenses</div><div class="t" style="left:1078px;width:80px;text-align:right;top:609px;color:#f4f4f4;font-weight:normal;font-size:11px;">130</div><div class="t" style="left:887px;top:623px;color:#fff;font-weight:bold;font-size:11px;">EBIT</div><div class="t" style="left:1078px;width:80px;text-align:right;top:623px;color:#f4f4f4;font-weight:normal;font-size:11px;">242</div><div class="t" style="left:887px;top:637px;color:#fff;font-weight:bold;font-size:11px;">Finance cost</div><div class="t" style="left:1078px;width:80px;text-align:right;top:637px;color:#f4f4f4;font-weight:normal;font-size:11px;">0.993</div><div class="t" style="left:887px;top:651px;color:#fff;font-weight:bold;font-size:11px;">EBITDA</div><div class="t" style="left:1078px;width:80px;text-align:right;top:651px;color:#f4f4f4;font-weight:normal;font-size:11px;">241</div><div class="t" style="left:887px;top:665px;color:#fff;font-weight:bold;font-size:11px;">TAX 20%</div><div class="t" style="left:1078px;width:80px;text-align:right;top:665px;color:#f4f4f4;font-weight:normal;font-size:11px;">48.2</div><div class="t" style="left:887px;top:679px;color:#fff;font-weight:bold;font-size:11px;">Net Profit</div><div class="t" style="left:995px;width:80px;text-align:right;top:679px;color:#f4f4f4;font-weight:normal;font-size:11px;">166</div><div class="t" style="left:1078px;width:80px;text-align:right;top:679px;color:#f4f4f4;font-weight:normal;font-size:11px;">192.28</div><div class="t" style="left:887px;top:693px;color:#fff;font-weight:bold;font-size:11px;">NPM</div><div class="t" style="left:1078px;width:80px;text-align:right;top:693px;color:#f4f4f4;font-weight:normal;font-size:11px;">14.79%</div><div class="t" style="left:887px;top:707px;color:#fff;font-weight:bold;font-size:11px;">Growth</div><div class="t" style="left:887px;top:721px;color:#fff;font-weight:bold;font-size:11px;">Shares</div><div class="t" style="left:1078px;width:80px;text-align:right;top:721px;color:#f4f4f4;font-weight:normal;font-size:11px;">546</div><div class="t" style="left:887px;top:735px;color:#fff;font-weight:bold;font-size:11px;">EPS.</div><div class="t" style="left:995px;width:80px;text-align:right;top:735px;color:#f4f4f4;font-weight:normal;font-size:11px;">0.26</div><div class="t" style="left:1078px;width:80px;text-align:right;top:735px;color:#f4f4f4;font-weight:normal;font-size:11px;">0.35</div><div class="t" style="left:887px;top:749px;color:#fff;font-weight:bold;font-size:11px;">Price</div><div class="t" style="left:1078px;width:80px;text-align:right;top:749px;color:#f4f4f4;font-weight:normal;font-size:11px;">6.44</div><div class="t" style="left:887px;top:763px;color:#fff;font-weight:bold;font-size:11px;">Forword P/E</div><div class="t" style="left:1078px;width:80px;text-align:right;top:763px;color:#f4f4f4;font-weight:normal;font-size:11px;">18.4</div><div class="t" style="left:887px;top:777px;color:#fff;font-weight:bold;font-size:11px;">Fair P/E</div><div class="t" style="left:1078px;width:80px;text-align:right;top:777px;color:#f4f4f4;font-weight:normal;font-size:11px;">30</div><div class="t" style="left:887px;top:791px;color:#fff;font-weight:bold;font-size:11px;">P/E mos</div><div class="t" style="left:1078px;width:80px;text-align:right;top:791px;color:#f4f4f4;font-weight:normal;font-size:11px;">38.6%</div><div class="t" style="left:887px;top:805px;color:#fff;font-weight:bold;font-size:11px;">Expected Growth</div><div class="t" style="left:1078px;width:80px;text-align:right;top:805px;color:#f4f4f4;font-weight:normal;font-size:11px;">20%</div><div class="t" style="left:887px;top:819px;color:#fff;font-weight:bold;font-size:11px;">Expected Return 3y.</div><div class="t" style="left:1078px;width:80px;text-align:right;top:819px;color:#f4f4f4;font-weight:normal;font-size:11px;">41.0%</div><div style="position:absolute;left:884px;top:860px;width:1024px;height:15px;background:#0070c0;"></div><div style="position:absolute;left:884px;top:874px;width:1024px;height:15px;background:#00b050;"></div><div style="position:absolute;left:884px;top:888px;width:1024px;height:57px;background:#00b0f0;"></div><div style="position:absolute;left:884px;top:860px;width:1024px;height:1px;background:#3a3a3a;"></div><div style="position:absolute;left:884px;top:874px;width:1024px;height:1px;background:#3a3a3a;"></div><div style="position:absolute;left:884px;top:888px;width:1024px;height:1px;background:#3a3a3a;"></div><div style="position:absolute;left:884px;top:902px;width:1024px;height:1px;background:#3a3a3a;"></div><div style="position:absolute;left:884px;top:916px;width:1024px;height:1px;background:#3a3a3a;"></div><div style="position:absolute;left:884px;top:930px;width:1024px;height:1px;background:#3a3a3a;"></div><div style="position:absolute;left:884px;top:944px;width:1024px;height:1px;background:#3a3a3a;"></div><div style="position:absolute;left:884px;top:860px;width:1px;height:85px;background:#3a3a3a;"></div><div style="position:absolute;left:994px;top:860px;width:1px;height:85px;background:#3a3a3a;"></div><div style="position:absolute;left:1077px;top:860px;width:1px;height:85px;background:#3a3a3a;"></div><div style="position:absolute;left:1160px;top:860px;width:1px;height:85px;background:#3a3a3a;"></div><div style="position:absolute;left:1243px;top:860px;width:1px;height:85px;background:#3a3a3a;"></div><div style="position:absolute;left:1326px;top:860px;width:1px;height:85px;background:#3a3a3a;"></div><div style="position:absolute;left:1409px;top:860px;width:1px;height:85px;background:#3a3a3a;"></div><div style="position:absolute;left:1492px;top:860px;width:1px;height:85px;background:#3a3a3a;"></div><div style="position:absolute;left:1575px;top:860px;width:1px;height:85px;background:#3a3a3a;"></div><div style="position:absolute;left:1658px;top:860px;width:1px;height:85px;background:#3a3a3a;"></div><div style="position:absolute;left:1741px;top:860px;width:1px;height:85px;background:#3a3a3a;"></div><div style="position:absolute;left:1824px;top:860px;width:1px;height:85px;background:#3a3a3a;"></div><div style="position:absolute;left:1907px;top:860px;width:1px;height:85px;background:#3a3a3a;"></div><div class="t" style="left:887px;top:861px;color:#fff;font-weight:bold;font-size:11px;">Years</div><div class="t" style="left:1078px;width:80px;text-align:right;top:861px;color:#fff;font-weight:bold;font-size:11px;">1</div><div class="t" style="left:1161px;width:80px;text-align:right;top:861px;color:#fff;font-weight:bold;font-size:11px;">2</div><div class="t" style="left:1244px;width:80px;text-align:right;top:861px;color:#fff;font-weight:bold;font-size:11px;">3</div><div class="t" style="left:1327px;width:80px;text-align:right;top:861px;color:#fff;font-weight:bold;font-size:11px;">4</div><div class="t" style="left:1410px;width:80px;text-align:right;top:861px;color:#fff;font-weight:bold;font-size:11px;">5</div><div class="t" style="left:1493px;width:80px;text-align:right;top:861px;color:#fff;font-weight:bold;font-size:11px;">6</div><div class="t" style="left:1576px;width:80px;text-align:right;top:861px;color:#fff;font-weight:bold;font-size:11px;">7</div><div class="t" style="left:1659px;width:80px;text-align:right;top:861px;color:#fff;font-weight:bold;font-size:11px;">8</div><div class="t" style="left:1742px;width:80px;text-align:right;top:861px;color:#fff;font-weight:bold;font-size:11px;">9</div><div class="t" style="left:887px;top:875px;color:#fff;font-weight:bold;font-size:11px;">Growth</div><div class="t" style="left:995px;width:80px;text-align:right;top:875px;color:#f4f4f4;font-weight:normal;font-size:11px;">20%</div><div class="t" style="left:887px;top:889px;color:#fff;font-weight:bold;font-size:11px;">nper</div><div class="t" style="left:995px;width:80px;text-align:right;top:889px;color:#f4f4f4;font-weight:normal;font-size:11px;">10</div><div class="t" style="left:887px;top:903px;color:#fff;font-weight:bold;font-size:11px;">Mos</div><div class="t" style="left:995px;width:80px;text-align:right;top:903px;color:#f4f4f4;font-weight:normal;font-size:11px;">38.3%</div><div class="t" style="left:887px;top:917px;color:#fff;font-weight:bold;font-size:11px;">Expected growth</div><div class="t" style="left:1078px;width:80px;text-align:right;top:917px;color:#f4f4f4;font-weight:normal;font-size:11px;">95.63%</div><div class="t" style="left:1161px;width:80px;text-align:right;top:917px;color:#f4f4f4;font-weight:normal;font-size:11px;">53.22%</div><div class="t" style="left:1244px;width:80px;text-align:right;top:917px;color:#f4f4f4;font-weight:normal;font-size:11px;">41.23%</div><div class="t" style="left:1327px;width:80px;text-align:right;top:917px;color:#f4f4f4;font-weight:normal;font-size:11px;">35.60%</div><div class="t" style="left:1410px;width:80px;text-align:right;top:917px;color:#f4f4f4;font-weight:normal;font-size:11px;">32.32%</div><div class="t" style="left:1493px;width:80px;text-align:right;top:917px;color:#f4f4f4;font-weight:normal;font-size:11px;">30.18%</div><div class="t" style="left:1576px;width:80px;text-align:right;top:917px;color:#f4f4f4;font-weight:normal;font-size:11px;">28.68%</div><div class="t" style="left:1659px;width:80px;text-align:right;top:917px;color:#f4f4f4;font-weight:normal;font-size:11px;">27.56%</div><div class="t" style="left:1742px;width:80px;text-align:right;top:917px;color:#f4f4f4;font-weight:normal;font-size:11px;">26.70%</div><div class="t" style="left:1825px;width:80px;text-align:right;top:917px;color:#f4f4f4;font-weight:normal;font-size:11px;">26.01%</div><div class="t" style="left:887px;top:931px;color:#fff;font-weight:bold;font-size:11px;">Price</div><div class="t" style="left:995px;width:80px;text-align:right;top:931px;color:#f4f4f4;font-weight:normal;font-size:11px;">21.19</div></div>
<div class="hd" style="left:23px;width:82px">O</div><div class="a" style="left:105px;top:270px;width:1px;height:17px;background:#5a5a5a"></div><div class="hd" style="left:106px;width:82px">P</div><div class="a" style="left:188px;top:270px;width:1px;height:17px;background:#5a5a5a"></div><div class="hd" style="left:189px;width:82px">Q</div><div class="a" style="left:271px;top:270px;width:1px;height:17px;background:#5a5a5a"></div><div class="hd" style="left:272px;width:88px">R</div><div class="a" style="left:360px;top:270px;width:1px;height:17px;background:#5a5a5a"></div><div class="hd" style="left:361px;width:237px">S</div><div class="a" style="left:598px;top:270px;width:1px;height:17px;background:#5a5a5a"></div><div class="hd" style="left:599px;width:36px">T</div><div class="a" style="left:635px;top:270px;width:1px;height:17px;background:#5a5a5a"></div><div class="hd" style="left:636px;width:82px">U</div><div class="a" style="left:718px;top:270px;width:1px;height:17px;background:#5a5a5a"></div><div class="hd" style="left:719px;width:82px">V</div><div class="a" style="left:801px;top:270px;width:1px;height:17px;background:#5a5a5a"></div><div class="hd" style="left:802px;width:82px">W</div><div class="a" style="left:884px;top:270px;width:1px;height:17px;background:#5a5a5a"></div><div class="hd" style="left:885px;width:109px">X</div><div class="a" style="left:994px;top:270px;width:1px;height:17px;background:#5a5a5a"></div><div class="hd" style="left:995px;width:82px">Y</div><div class="a" style="left:1077px;top:270px;width:1px;height:17px;background:#5a5a5a"></div><div class="hd" style="left:1078px;width:82px">Z</div><div class="a" style="left:1160px;top:270px;width:1px;height:17px;background:#5a5a5a"></div><div class="hd" style="left:1161px;width:82px">AA</div><div class="a" style="left:1243px;top:270px;width:1px;height:17px;background:#5a5a5a"></div><div class="hd" style="left:1244px;width:82px">AB</div><div class="a" style="left:1326px;top:270px;width:1px;height:17px;background:#5a5a5a"></div><div class="hd" style="left:1327px;width:82px">AC</div><div class="a" style="left:1409px;top:270px;width:1px;height:17px;background:#5a5a5a"></div><div class="hd" style="left:1410px;width:82px">AD</div><div class="a" style="left:1492px;top:270px;width:1px;height:17px;background:#5a5a5a"></div><div class="hd" style="left:1493px;width:82px">AE</div><div class="a" style="left:1575px;top:270px;width:1px;height:17px;background:#5a5a5a"></div><div class="hd" style="left:1576px;width:82px">AF</div><div class="a" style="left:1658px;top:270px;width:1px;height:17px;background:#5a5a5a"></div><div class="hd" style="left:1659px;width:82px">AG</div><div class="a" style="left:1741px;top:270px;width:1px;height:17px;background:#5a5a5a"></div><div class="hd" style="left:1742px;width:82px">AH</div><div class="a" style="left:1824px;top:270px;width:1px;height:17px;background:#5a5a5a"></div><div class="hd" style="left:1825px;width:82px">AI</div>
<div class="a" style="left:22px;top:270px;width:1px;height:695px;background:#5a5a5a"></div>
<div class="a" style="left:23px;top:286px;width:1871px;height:1px;background:#9a9a9a"></div>
<div class="a" style="left:0;top:287px;width:22px;height:678px;overflow:hidden"></div>
<div class="a" style="left:0;top:0;width:22px;height:965px;overflow:hidden;clip-path:inset(287px 0 0 0)"><div class="rn" style="top:287px">618</div><div class="rn" style="top:301px">619</div><div class="rn" style="top:315px">620</div><div class="rn" style="top:329px">621</div><div class="rn" style="top:343px">622</div><div class="rn" style="top:357px">623</div><div class="rn" style="top:371px">624</div><div class="rn" style="top:385px">625</div><div class="rn" style="top:399px">626</div><div class="rn" style="top:413px">627</div><div class="rn" style="top:427px">628</div><div class="rn" style="top:441px">629</div><div class="rn" style="top:455px">630</div><div class="rn" style="top:469px">631</div><div class="rn" style="top:483px">632</div><div class="rn" style="top:497px">633</div><div class="rn" style="top:511px">634</div><div class="rn" style="top:525px">635</div><div class="rn" style="top:539px">636</div><div class="rn" style="top:553px">637</div><div class="rn" style="top:567px">638</div><div class="rn" style="top:581px">639</div><div class="rn" style="top:595px">640</div><div class="rn" style="top:609px">641</div><div class="rn" style="top:623px">642</div><div class="rn" style="top:637px">643</div><div class="rn" style="top:651px">644</div><div class="a" style="left:0;top:664px;width:21px;height:15px;background:#6a6a6a;border-top:1px solid #b8b8b8;border-bottom:1px solid #b8b8b8"></div><div class="a" style="left:21px;top:664px;width:2px;height:15px;background:#1e8f3e"></div><div class="rn" style="top:665px">645</div><div class="rn" style="top:679px">646</div><div class="rn" style="top:693px">647</div><div class="rn" style="top:707px">648</div><div class="rn" style="top:721px">649</div><div class="rn" style="top:735px">650</div><div class="rn" style="top:749px">651</div><div class="rn" style="top:763px">652</div><div class="rn" style="top:777px">653</div><div class="rn" style="top:791px">654</div><div class="rn" style="top:805px">655</div><div class="rn" style="top:819px">656</div><div class="rn" style="top:833px">657</div><div class="rn" style="top:847px">658</div><div class="rn" style="top:861px">659</div><div class="rn" style="top:875px">660</div><div class="rn" style="top:889px">661</div><div class="rn" style="top:903px">662</div><div class="rn" style="top:917px">663</div><div class="rn" style="top:931px">664</div><div class="rn" style="top:945px">665</div><div class="rn" style="top:959px">666</div></div>
<div class="a" style="left:9px;top:273px;width:0;height:0;border-left:11px solid transparent;border-bottom:11px solid #6f8f6f"></div>
<div class="a" style="left:1894px;top:269px;width:26px;height:696px;background:#141414"></div>
<div class="a" style="left:0px;top:0px;width:1920px;height:60px;background:#0a0a0a;border-radius:0px;"></div><svg class="a" style="left:19px;top:19px" width="23" height="23" viewBox="0 0 23 23" fill="none"><rect x="5" y="1" width="16" height="20" fill="#1f7a35"/><rect x="5" y="1" width="16" height="5" fill="#3aa55c"/><rect x="14" y="1" width="7" height="5" fill="#22b8a8"/><rect x="14" y="6" width="7" height="5" fill="#3aa660"/><rect x="1" y="5" width="13.5" height="12" fill="#1e8a37"/><path d="M4.8 8 L10.7 14.5 M10.7 8 L4.8 14.5" stroke="#fff" stroke-width="1.9"/></svg><svg class="a" style="left:61px;top:13.5px;overflow:visible" width="104" height="30"><text x="0" y="22.5" textLength="104" lengthAdjust="spacingAndGlyphs" font-family="Liberation Sans" font-size="15" fill="#f0f0f0" font-weight="normal">การบันทึกอัตโนมัติ</text></svg><div class="a" style="left:174px;top:17px;width:54px;height:25px;background:#292929;border:1.5px solid #e8e0e8;border-radius:13px;"></div><div class="a" style="left:178px;top:21px;width:18px;height:18px;background:#ffffff;border-radius:9px;"></div><svg class="a" style="left:242px;top:20px" width="20" height="20" viewBox="0 0 20 20" fill="none"><path d="M0.7 0.7 H19.3 V19.3 H3.5 L0.7 16.5 Z" stroke="#f0f0f0" stroke-width="1.4"/><path d="M4 0.7 V8.3 H16 V0.7" stroke="#f0f0f0" stroke-width="1.4"/><path d="M5.5 19.3 V12.6 H14.5 V19.3" stroke="#f0f0f0" stroke-width="1.4"/></svg><svg class="a" style="left:287px;top:13.5px;overflow:visible" width="35" height="30"><text x="0" y="22.5" textLength="35" lengthAdjust="spacingAndGlyphs" font-family="Liberation Sans" font-size="15" fill="#f4f0f4" font-weight="normal">สำเนา</text></svg><div class="a" style="left:326px;top:16px;height:30px;line-height:30px;font-size:15px;color:#f4f0f4;font-weight:normal;white-space:nowrap;">Template V2022.05.20</div><svg class="a" style="left:478px;top:25px" width="12" height="10" viewBox="0 0 12 10" fill="none"><path d="M1 3.0 L6 7.5 L11 3.0" stroke="#f0f0f0" stroke-width="1.6"/></svg><div class="a" style="left:711px;top:10px;width:518px;height:40px;background:#262626;border-radius:6px;"></div><svg class="a" style="left:735px;top:19px" width="21" height="21" viewBox="0 0 21 21" fill="none"><circle cx="13" cy="8" r="6" stroke="#c8c8c8" stroke-width="1.5"/><path d="M8.5 12.5 L2 19" stroke="#c8c8c8" stroke-width="1.5"/></svg><svg class="a" style="left:772px;top:13.5px;overflow:visible" width="38" height="30"><text x="0" y="22.5" textLength="38" lengthAdjust="spacingAndGlyphs" font-family="Liberation Sans" font-size="15" fill="#a8a8a8" font-weight="normal">ค้นหา</text></svg><div class="a" style="left:1584px;top:18px;width:88px;height:23px;background:#ffffff;border-radius:2px;"></div><svg class="a" style="left:1595px;top:14.0px;overflow:visible" width="66" height="28"><text x="0" y="21.0" textLength="66" lengthAdjust="spacingAndGlyphs" font-family="Liberation Sans" font-size="14" fill="#111" font-weight="normal">ลงชื่อเข้าใช้</text></svg><svg class="a" style="left:1700px;top:19px" width="24" height="22" viewBox="0 0 24 22" fill="none"><path d="M1.5 17.5 L12.2 2.9 L19 9.3 L4.3 20.3 Z" stroke="#f0e8f0" stroke-width="1.5" stroke-linejoin="round"/><path d="M9.5 17 A3.2 3.2 0 0 0 14.6 13.8" stroke="#f0e8f0" stroke-width="1.4"/><path d="M15.3 1 L16 3.6 M17.6 4.2 L20.6 1.4 M18.6 6.8 L21.5 6.8" stroke="#f0e8f0" stroke-width="1.4" stroke-linecap="round"/></svg><div class="a" style="left:1763px;top:29px;width:14px;height:1px;background:#e8e8e8;border-radius:0px;"></div><svg class="a" style="left:1822px;top:22px" width="17" height="17" viewBox="0 0 17 17" fill="none"><rect x="1.9" y="4.9" width="9.4" height="9.4" rx="1.8" stroke="#f0f0f0" stroke-width="1.3"/><path d="M4.8 2.3 H11.2 A2.6 2.6 0 0 1 13.8 4.9 V11.3" stroke="#f0f0f0" stroke-width="1.3"/></svg><svg class="a" style="left:1882px;top:23px" width="16" height="15" viewBox="0 0 16 15" fill="none"><path d="M1 1 L15 14 M15 1 L1 14" stroke="#e8e8e8" stroke-width="1.4"/></svg><svg class="a" style="left:26px;top:62.0px;overflow:visible" width="29" height="32"><text x="0" y="24.0" textLength="29" lengthAdjust="spacingAndGlyphs" font-family="Liberation Sans" font-size="16" fill="#f0f0f0" font-weight="normal">ไฟล์</text></svg><svg class="a" style="left:84px;top:62.0px;overflow:visible" width="63" height="32"><text x="0" y="24.0" textLength="63" lengthAdjust="spacingAndGlyphs" font-family="Liberation Sans" font-size="16" fill="#f0f0f0" font-weight="bold">หน้าแรก</text></svg><svg class="a" style="left:173px;top:62.0px;overflow:visible" width="34" height="32"><text x="0" y="24.0" textLength="34" lengthAdjust="spacingAndGlyphs" font-family="Liberation Sans" font-size="16" fill="#f0f0f0" font-weight="normal">แทรก</text></svg><svg class="a" style="left:244px;top:62.0px;overflow:visible" width="133" height="32"><text x="0" y="24.0" textLength="133" lengthAdjust="spacingAndGlyphs" font-family="Liberation Sans" font-size="16" fill="#f0f0f0" font-weight="normal">เค้าโครงหน้ากระดาษ</text></svg><svg class="a" style="left:411px;top:62.0px;overflow:visible" width="27" height="32"><text x="0" y="24.0" textLength="27" lengthAdjust="spacingAndGlyphs" font-family="Liberation Sans" font-size="16" fill="#f0f0f0" font-weight="normal">สูตร</text></svg><svg class="a" style="left:466px;top:62.0px;overflow:visible" width="39" height="32"><text x="0" y="24.0" textLength="39" lengthAdjust="spacingAndGlyphs" font-family="Liberation Sans" font-size="16" fill="#f0f0f0" font-weight="normal">ข้อมูล</text></svg><svg class="a" style="left:532px;top:62.0px;overflow:visible" width="24" height="32"><text x="0" y="24.0" textLength="24" lengthAdjust="spacingAndGlyphs" font-family="Liberation Sans" font-size="16" fill="#f0f0f0" font-weight="normal">รีวิว</text></svg><svg class="a" style="left:583px;top:62.0px;overflow:visible" width="45" height="32"><text x="0" y="24.0" textLength="45" lengthAdjust="spacingAndGlyphs" font-family="Liberation Sans" font-size="16" fill="#f0f0f0" font-weight="normal">มุมมอง</text></svg><svg class="a" style="left:657px;top:62.0px;overflow:visible" width="55" height="32"><text x="0" y="24.0" textLength="55" lengthAdjust="spacingAndGlyphs" font-family="Liberation Sans" font-size="16" fill="#f0f0f0" font-weight="normal">อัตโนมัติ</text></svg><svg class="a" style="left:740px;top:62.0px;overflow:visible" width="37" height="32"><text x="0" y="24.0" textLength="37" lengthAdjust="spacingAndGlyphs" font-family="Liberation Sans" font-size="16" fill="#f0f0f0" font-weight="normal">วิธีใช้</text></svg><div class="a" style="left:84px;top:92px;width:64px;height:3px;background:#5db65d;border-radius:2px;"></div><div class="a" style="left:1708px;top:64px;width:105px;height:30px;background:#272727;border:1px solid #707070;border-radius:4px;"></div><svg class="a" style="left:1717px;top:71px" width="17" height="16" viewBox="0 0 17 16" fill="none"><path d="M1.5 1.5 H15.5 V10.5 H7 L3.5 14 V10.5 H1.5 Z" stroke="#e8e8e8" stroke-width="1.4" stroke-linejoin="round"/></svg><svg class="a" style="left:1737px;top:62.5px;overflow:visible" width="65" height="30"><text x="0" y="22.5" textLength="65" lengthAdjust="spacingAndGlyphs" font-family="Liberation Sans" font-size="15" fill="#f4f4f4" font-weight="normal">ข้อคิดเห็น</text></svg><div class="a" style="left:1824px;top:64px;width:81px;height:30px;background:#38a85c;border-radius:5px;"></div><svg class="a" style="left:1832px;top:70px" width="17" height="17" viewBox="0 0 17 17" fill="none"><path d="M2 7 V15.5 H13 V12" stroke="#111" stroke-width="1.5"/><path d="M5 12 C5 7 8 5.5 13 5.5 M10 2 L14 5.5 L10 9" stroke="#111" stroke-width="1.5"/></svg><svg class="a" style="left:1853px;top:62.5px;overflow:visible" width="27" height="30"><text x="0" y="22.5" textLength="27" lengthAdjust="spacingAndGlyphs" font-family="Liberation Sans" font-size="15" fill="#111111" font-weight="normal">แชร์</text></svg><svg class="a" style="left:1889px;top:76px" width="10" height="8" viewBox="0 0 10 8" fill="none"><path d="M1 2.4 L5 6.0 L9 2.4" stroke="#111111" stroke-width="1.4"/></svg><div class="a" style="left:10px;top:98px;width:1900px;height:124px;background:#292929;border-radius:8px;"></div><div class="a" style="left:84px;top:104px;width:1px;height:111px;background:#4a4a4a;border-radius:0px;"></div><div class="a" style="left:208px;top:104px;width:1px;height:111px;background:#4a4a4a;border-radius:0px;"></div><div class="a" style="left:504px;top:104px;width:1px;height:111px;background:#4a4a4a;border-radius:0px;"></div><div class="a" style="left:876px;top:104px;width:1px;height:111px;background:#4a4a4a;border-radius:0px;"></div><div class="a" style="left:1076px;top:104px;width:1px;height:111px;background:#4a4a4a;border-radius:0px;"></div><div class="a" style="left:1312px;top:104px;width:1px;height:111px;background:#4a4a4a;border-radius:0px;"></div><div class="a" style="left:1492px;top:104px;width:1px;height:111px;background:#4a4a4a;border-radius:0px;"></div><div class="a" style="left:1789px;top:104px;width:1px;height:111px;background:#4a4a4a;border-radius:0px;"></div><svg class="a" style="left:34px;top:195.5px;overflow:visible" width="30" height="26"><text x="0" y="19.5" textLength="30" lengthAdjust="spacingAndGlyphs" font-family="Liberation Sans" font-size="13" fill="#dcdcdc" font-weight="normal">เลิกทำ</text></svg><svg class="a" style="left:112px;top:195.5px;overflow:visible" width="47" height="26"><text x="0" y="19.5" textLength="47" lengthAdjust="spacingAndGlyphs" font-family="Liberation Sans" font-size="13" fill="#dcdcdc" font-weight="normal">คลิปบอร์ด</text></svg><svg class="a" style="left:331px;top:195.5px;overflow:visible" width="31" height="26"><text x="0" y="19.5" textLength="31" lengthAdjust="spacingAndGlyphs" font-family="Liberation Sans" font-size="13" fill="#dcdcdc" font-weight="normal">ฟอนต์</text></svg><svg class="a" style="left:654px;top:195.5px;overflow:visible" width="52" height="26"><text x="0" y="19.5" textLength="52" lengthAdjust="spacingAndGlyphs" font-family="Liberation Sans" font-size="13" fill="#dcdcdc" font-weight="normal">การจัดแนว</text></svg><svg class="a" style="left:951px;top:195.5px;overflow:visible" width="30" height="26"><text x="0" y="19.5" textLength="30" lengthAdjust="spacingAndGlyphs" font-family="Liberation Sans" font-size="13" fill="#dcdcdc" font-weight="normal">ตัวเลข</text></svg><svg class="a" style="left:1182px;top:195.5px;overflow:visible" width="24" height="26"><text x="0" y="19.5" textLength="24" lengthAdjust="spacingAndGlyphs" font-family="Liberation Sans" font-size="13" fill="#dcdcdc" font-weight="normal">สไตล์</text></svg><svg class="a" style="left:1389px;top:195.5px;overflow:visible" width="26" height="26"><text x="0" y="19.5" textLength="26" lengthAdjust="spacingAndGlyphs" font-family="Liberation Sans" font-size="13" fill="#dcdcdc" font-weight="normal">เซลล์</text></svg><svg class="a" style="left:1618px;top:195.5px;overflow:visible" width="45" height="26"><text x="0" y="19.5" textLength="45" lengthAdjust="spacingAndGlyphs" font-family="Liberation Sans" font-size="13" fill="#dcdcdc" font-weight="normal">การแก้ไข</text></svg><svg class="a" style="left:193px;top:204px" width="12" height="12" viewBox="0 0 12 12" fill="none"><path d="M1.6 10 V1.6 H10" stroke="#f0f0f0" stroke-width="1.3"/><path d="M5 5 L10 10 M5 10.4 H10.4 V5" stroke="#f0f0f0" stroke-width="1.3"/></svg><svg class="a" style="left:489px;top:204px" width="12" height="12" viewBox="0 0 12 12" fill="none"><path d="M1.6 10 V1.6 H10" stroke="#f0f0f0" stroke-width="1.3"/><path d="M5 5 L10 10 M5 10.4 H10.4 V5" stroke="#f0f0f0" stroke-width="1.3"/></svg><svg class="a" style="left:861px;top:204px" width="12" height="12" viewBox="0 0 12 12" fill="none"><path d="M1.6 10 V1.6 H10" stroke="#f0f0f0" stroke-width="1.3"/><path d="M5 5 L10 10 M5 10.4 H10.4 V5" stroke="#f0f0f0" stroke-width="1.3"/></svg><svg class="a" style="left:1061px;top:204px" width="12" height="12" viewBox="0 0 12 12" fill="none"><path d="M1.6 10 V1.6 H10" stroke="#f0f0f0" stroke-width="1.3"/><path d="M5 5 L10 10 M5 10.4 H10.4 V5" stroke="#f0f0f0" stroke-width="1.3"/></svg><svg class="a" style="left:29px;top:106px" width="22" height="22" viewBox="0 0 22 22" fill="none"><path d="M5 3 V9 H11" stroke="#c8c8c8" stroke-width="1.6" fill="none"/><path d="M5 9 C9 3 19 4 19 11 C19 15 16 18 13 20" stroke="#c8c8c8" stroke-width="1.6"/></svg><svg class="a" style="left:58px;top:113px" width="10" height="8" viewBox="0 0 10 8" fill="none"><path d="M1 2.4 L5 6.0 L9 2.4" stroke="#d0d0d0" stroke-width="1.4"/></svg><svg class="a" style="left:29px;top:138px" width="22" height="22" viewBox="0 0 22 22" fill="none"><path d="M17 3 V9 H11" stroke="#7a7a7a" stroke-width="1.6"/><path d="M17 9 C13 3 3 4 3 11 C3 15 6 18 9 20" stroke="#7a7a7a" stroke-width="1.6"/></svg><svg class="a" style="left:58px;top:144px" width="10" height="8" viewBox="0 0 10 8" fill="none"><path d="M1 2.4 L5 6.0 L9 2.4" stroke="#6a6a6a" stroke-width="1.2"/></svg><svg class="a" style="left:106px;top:106px" width="36" height="40" viewBox="0 0 36 40" fill="none"><rect x="2" y="7" width="22" height="28" rx="1" stroke="#e39b45" stroke-width="3" fill="none"/><path d="M8 7 V4 H12 A2 2 0 0 1 16 4 H19 V9 H8 Z" stroke="#d8d8d8" stroke-width="1.6" fill="#292929"/><rect x="16" y="15" width="17" height="22" stroke="#d8d8d8" stroke-width="1.6" fill="#292929"/></svg><svg class="a" style="left:111px;top:145.0px;overflow:visible" width="19" height="28"><text x="0" y="21.0" textLength="19" lengthAdjust="spacingAndGlyphs" font-family="Liberation Sans" font-size="14" fill="#e8e8e8" font-weight="normal">วาง</text></svg><svg class="a" style="left:115px;top:176px" width="10" height="8" viewBox="0 0 10 8" fill="none"><path d="M1 2.4 L5 6.0 L9 2.4" stroke="#d0d0d0" stroke-width="1.4"/></svg><svg class="a" style="left:153px;top:106px" width="18" height="22" viewBox="0 0 18 22" fill="none"><path d="M4 1 L13 15 M14 1 L5 15" stroke="#d8d8d8" stroke-width="1.4"/><circle cx="4.5" cy="18" r="2.5" stroke="#4aa3f0" stroke-width="1.5"/><circle cx="13.5" cy="18" r="2.5" stroke="#4aa3f0" stroke-width="1.5"/></svg><svg class="a" style="left:152px;top:138px" width="24" height="22" viewBox="0 0 24 22" fill="none"><path d="M2 1 H9 V16 H2 Z" stroke="#d8d8d8" stroke-width="1.5"/><path d="M7 5 H15 L19 9 V21 H7 Z" stroke="#d8d8d8" stroke-width="1.5" fill="#292929"/><path d="M10 14 H16 M10 17 H16" stroke="#d8d8d8" stroke-width="1.2"/></svg><svg class="a" style="left:182px;top:145px" width="10" height="8" viewBox="0 0 10 8" fill="none"><path d="M1 2.4 L5 6.0 L9 2.4" stroke="#d0d0d0" stroke-width="1.4"/></svg><svg class="a" style="left:153px;top:170px" width="22" height="20" viewBox="0 0 22 20" fill="none"><path d="M13 6 L19 1" stroke="#d8d8d8" stroke-width="2.5"/><path d="M9 5 L16 11 L10 17 L2 12 Z" fill="#e8a35a" stroke="#e8a35a"/><path d="M9 5 L16 11" stroke="#f4f4f4" stroke-width="1.5"/></svg><div class="a" style="left:219px;top:112px;width:126px;height:30px;background:#1f1f1f;border:1px solid #5a5a5a;border-radius:5px;"></div><div class="a" style="left:222px;top:112px;height:30px;line-height:30px;font-size:15px;color:#ffffff;font-weight:normal;white-space:nowrap;">Century Gothic</div><svg class="a" style="left:333px;top:123px" width="10" height="8" viewBox="0 0 10 8" fill="none"><path d="M1 2.4 L5 6.0 L9 2.4" stroke="#e0e0e0" stroke-width="1.4"/></svg><div class="a" style="left:348px;top:112px;width:82px;height:30px;background:#1f1f1f;border:1px solid #5a5a5a;border-radius:5px;"></div><div class="a" style="left:352px;top:112px;height:30px;line-height:30px;font-size:15px;color:#ffffff;font-weight:normal;white-space:nowrap;">11</div><svg class="a" style="left:418px;top:123px" width="10" height="8" viewBox="0 0 10 8" fill="none"><path d="M1 2.4 L5 6.0 L9 2.4" stroke="#e0e0e0" stroke-width="1.4"/></svg><div class="a" style="left:440px;top:107px;height:40px;line-height:40px;font-size:20px;color:#d0d0d0;font-weight:normal;white-space:nowrap;">A</div><svg class="a" style="left:453px;top:113px" width="8" height="6" viewBox="0 0 8 6" fill="none"><path d="M1 5 L4 1.5 L7 5" stroke="#4aa3f0" stroke-width="1.4"/></svg><div class="a" style="left:472px;top:112px;height:32px;line-height:32px;font-size:16px;color:#d0d0d0;font-weight:normal;white-space:nowrap;">A</div><svg class="a" style="left:483px;top:115px" width="8" height="6" viewBox="0 0 8 6" fill="none"><path d="M1 1 L4 4.5 L7 1" stroke="#4aa3f0" stroke-width="1.4"/></svg><div class="a" style="left:228px;top:151px;height:32px;line-height:32px;font-size:16px;color:#d8d8d8;font-weight:bold;white-space:nowrap;">B</div><svg class="a" style="left:259px;top:157px" width="14" height="17" viewBox="0 0 14 17" fill="none"><path d="M6 1.5 H13 M1 15.5 H8 M9.5 1.5 L4.5 15.5" stroke="#d0d0d0" stroke-width="1.5"/></svg><div class="a" style="left:292px;top:150px;height:32px;line-height:32px;font-size:16px;color:#d8d8d8;font-weight:normal;white-space:nowrap;text-decoration:underline">U</div><svg class="a" style="left:316px;top:163px" width="10" height="8" viewBox="0 0 10 8" fill="none"><path d="M1 2.4 L5 6.0 L9 2.4" stroke="#d0d0d0" stroke-width="1.4"/></svg><div class="a" style="left:334px;top:152px;width:1px;height:29px;background:#4a4a4a;border-radius:0px;"></div><svg class="a" style="left:341px;top:157px" width="21" height="20" viewBox="0 0 21 20" fill="none"><path d="M1 1 H20 V19 H1 Z M10.5 1 V19 M1 10 H20" stroke="#c8c8c8" stroke-width="1.1" stroke-dasharray="2 1.5"/><path d="M1 19 H20" stroke="#d8d8d8" stroke-width="1.6"/></svg><svg class="a" style="left:370px;top:163px" width="10" height="8" viewBox="0 0 10 8" fill="none"><path d="M1 2.4 L5 6.0 L9 2.4" stroke="#d0d0d0" stroke-width="1.4"/></svg><div class="a" style="left:388px;top:152px;width:1px;height:29px;background:#4a4a4a;border-radius:0px;"></div><svg class="a" style="left:397px;top:156px" width="22" height="17" viewBox="0 0 22 17" fill="none"><path d="M2 10 L9 4 L15 11 L10 15.5 Z" stroke="#d8d8d8" stroke-width="1.4" stroke-linejoin="round"/><path d="M7 5.5 V2.5 A2 2 0 0 1 11 2.5 V7" stroke="#d8d8d8" stroke-width="1.3"/><path d="M16.5 5.5 C19 8 19 11 17.5 12" stroke="#4aa3f0" stroke-width="2"/></svg><div class="a" style="left:396px;top:172px;width:20px;height:5px;background:#ffff00;border-radius:0px;"></div><svg class="a" style="left:425px;top:163px" width="10" height="8" viewBox="0 0 10 8" fill="none"><path d="M1 2.4 L5 6.0 L9 2.4" stroke="#d0d0d0" stroke-width="1.4"/></svg><svg class="a" style="left:450px;top:157px" width="14" height="15" viewBox="0 0 14 15" fill="none"><path d="M1.2 14 L7 1.2 L12.8 14 M3.5 9.5 H10.5" stroke="#d0d0d0" stroke-width="1.4"/></svg><div class="a" style="left:447px;top:172px;width:20px;height:5px;background:#ff0000;border-radius:0px;"></div><svg class="a" style="left:476px;top:163px" width="10" height="8" viewBox="0 0 10 8" fill="none"><path d="M1 2.4 L5 6.0 L9 2.4" stroke="#d0d0d0" stroke-width="1.4"/></svg><svg class="a" style="left:521px;top:116px" width="18" height="13" viewBox="0 0 18 13" fill="none"><path d="M0 2 H18" stroke="#d0d0d0" stroke-width="1.4"/><path d="M3 6.5 H15" stroke="#d0d0d0" stroke-width="1.4"/><path d="M0 11 H18" stroke="#d0d0d0" stroke-width="1.4"/></svg><svg class="a" style="left:553px;top:119px" width="18" height="13" viewBox="0 0 18 13" fill="none"><path d="M0 2 H18" stroke="#d0d0d0" stroke-width="1.4"/><path d="M3 6.5 H15" stroke="#d0d0d0" stroke-width="1.4"/><path d="M0 11 H18" stroke="#d0d0d0" stroke-width="1.4"/></svg><div class="a" style="left:579px;top:112px;width:30px;height:30px;background:#3d3d3d;border:1px solid #8a8a8a;border-radius:4px;"></div><svg class="a" style="left:585px;top:123px" width="18" height="13" viewBox="0 0 18 13" fill="none"><path d="M0 2 H18" stroke="#d0d0d0" stroke-width="1.4"/><path d="M3 6.5 H15" stroke="#d0d0d0" stroke-width="1.4"/><path d="M0 11 H18" stroke="#d0d0d0" stroke-width="1.4"/></svg><div class="a" style="left:611px;top:112px;width:1px;height:30px;background:#4a4a4a;border-radius:0px;"></div><svg class="a" style="left:617px;top:115px" width="26" height="22" viewBox="0 0 26 22" fill="none"><text x="2" y="15" font-size="11" fill="#c8c8c8" transform="rotate(-45 8 10)" font-family="Liberation Sans">ab</text><path d="M8 20 L22 6 M17 6 H22 V11" stroke="#4aa3f0" stroke-width="1.5"/></svg><svg class="a" style="left:646px;top:123px" width="10" height="8" viewBox="0 0 10 8" fill="none"><path d="M1 2.4 L5 6.0 L9 2.4" stroke="#d0d0d0" stroke-width="1.4"/></svg><div class="a" style="left:683px;top:111px;width:1px;height:78px;background:#4a4a4a;border-radius:0px;"></div><svg class="a" style="left:698px;top:117px" width="20" height="21" viewBox="0 0 20 21" fill="none"><text x="1" y="9" font-size="10" fill="#c8c8c8" font-family="Liberation Sans">ab</text><text x="1" y="19" font-size="10" fill="#c8c8c8" font-family="Liberation Sans">c</text><path d="M17 10 C17 16 14 17 8 17 M11 14 L8 17 L11 20" stroke="#4aa3f0" stroke-width="1.4"/></svg><svg class="a" style="left:721px;top:112.0px;overflow:visible" width="65" height="28"><text x="0" y="21.0" textLength="65" lengthAdjust="spacingAndGlyphs" font-family="Liberation Sans" font-size="14" fill="#ececec" font-weight="normal">ตัดข้อความ</text></svg><svg class="a" style="left:521px;top:160px" width="18" height="16.5" viewBox="0 0 18 16.5" fill="none"><path d="M0 1 H18" stroke="#d0d0d0" stroke-width="1.4"/><path d="M0 5.5 H12" stroke="#d0d0d0" stroke-width="1.4"/><path d="M0 10 H18" stroke="#d0d0d0" stroke-width="1.4"/><path d="M0 14.5 H12" stroke="#d0d0d0" stroke-width="1.4"/></svg><svg class="a" style="left:553px;top:160px" width="18" height="16.5" viewBox="0 0 18 16.5" fill="none"><path d="M0 1 H18" stroke="#d0d0d0" stroke-width="1.4"/><path d="M3 5.5 H15" stroke="#d0d0d0" stroke-width="1.4"/><path d="M0 10 H18" stroke="#d0d0d0" stroke-width="1.4"/><path d="M3 14.5 H15" stroke="#d0d0d0" stroke-width="1.4"/></svg><svg class="a" style="left:585px;top:160px" width="18" height="16.5" viewBox="0 0 18 16.5" fill="none"><path d="M0 1 H18" stroke="#d0d0d0" stroke-width="1.4"/><path d="M6 5.5 H18" stroke="#d0d0d0" stroke-width="1.4"/><path d="M0 10 H18" stroke="#d0d0d0" stroke-width="1.4"/><path d="M6 14.5 H18" stroke="#d0d0d0" stroke-width="1.4"/></svg><div class="a" style="left:611px;top:152px;width:1px;height:29px;background:#4a4a4a;border-radius:0px;"></div><svg class="a" style="left:619px;top:160px" width="20" height="17" viewBox="0 0 20 17" fill="none"><path d="M9 1 H19 M10 6 H19 M10 10.5 H19 M0 15.5 H19" stroke="#d0d0d0" stroke-width="1.4"/><path d="M7 8 H1 M4 5 L1 8 L4 11" stroke="#4aa3f0" stroke-width="1.4"/></svg><svg class="a" style="left:651px;top:160px" width="20" height="17" viewBox="0 0 20 17" fill="none"><path d="M9 1 H19 M10 6 H19 M10 10.5 H19 M0 15.5 H19" stroke="#d0d0d0" stroke-width="1.4"/><path d="M1 8 H7 M4 5 L7 8 L4 11" stroke="#4aa3f0" stroke-width="1.4"/></svg><svg class="a" style="left:695px;top:156px" width="22" height="21" viewBox="0 0 22 21" fill="none"><rect x="1" y="1" width="19" height="19" stroke="#b8b8b8" stroke-width="1.3"/><path d="M1 5 H20 M1 16 H20 M10.5 1 V5 M10.5 16 V20" stroke="#b8b8b8" stroke-width="1.1"/><rect x="2" y="5.5" width="17" height="10" fill="#1d5f9e" stroke="#4aa3f0" stroke-width="1.2"/><path d="M4.5 10.5 H16.5 M7 8 L4.5 10.5 L7 13 M14 8 L16.5 10.5 L14 13" stroke="#e8e8e8" stroke-width="1.2"/></svg><svg class="a" style="left:721px;top:152.0px;overflow:visible" width="114" height="28"><text x="0" y="21.0" textLength="114" lengthAdjust="spacingAndGlyphs" font-family="Liberation Sans" font-size="14" fill="#ececec" font-weight="normal">ผสานและจัดกึ่งกลาง</text></svg><svg class="a" style="left:850px;top:163px" width="10" height="8" viewBox="0 0 10 8" fill="none"><path d="M1 2.4 L5 6.0 L9 2.4" stroke="#d0d0d0" stroke-width="1.4"/></svg><div class="a" style="left:887px;top:112px;width:179px;height:29px;background:#1f1f1f;border:1px solid #5a5a5a;border-radius:5px;"></div><svg class="a" style="left:890px;top:110.5px;overflow:visible" width="28" height="30"><text x="0" y="22.5" textLength="28" lengthAdjust="spacingAndGlyphs" font-family="Liberation Sans" font-size="15" fill="#ffffff" font-weight="normal">ทั่วไป</text></svg><svg class="a" style="left:1054px;top:123px" width="10" height="8" viewBox="0 0 10 8" fill="none"><path d="M1 2.4 L5 6.0 L9 2.4" stroke="#e0e0e0" stroke-width="1.4"/></svg><svg class="a" style="left:891px;top:160px" width="23" height="19" viewBox="0 0 23 19" fill="none"><rect x="1" y="1" width="18" height="12" stroke="#b8b8b8" stroke-width="1.3"/><circle cx="6.5" cy="7" r="3" stroke="#b8b8b8" stroke-width="1.3"/><circle cx="17" cy="13" r="4.5" fill="#e8a35a"/><path d="M12.5 11 A4.5 2 0 0 0 21.5 11 M12.5 14 A4.5 2 0 0 0 21.5 14" stroke="#292929" stroke-width="0.8"/></svg><svg class="a" style="left:920px;top:163px" width="10" height="8" viewBox="0 0 10 8" fill="none"><path d="M1 2.4 L5 6.0 L9 2.4" stroke="#d0d0d0" stroke-width="1.4"/></svg><div class="a" style="left:942px;top:146px;height:42px;line-height:42px;font-size:21px;color:#d0d0d0;font-weight:normal;white-space:nowrap;">%</div><svg class="a" style="left:978px;top:157px" width="14" height="20" viewBox="0 0 14 20" fill="none"><circle cx="7" cy="6" r="3.6" fill="#d8d8d8"/><path d="M9.8 6 C10 11 8 14 4 16" stroke="#d8d8d8" stroke-width="2.4"/></svg><div class="a" style="left:1003px;top:152px;width:1px;height:29px;background:#4a4a4a;border-radius:0px;"></div><svg class="a" style="left:1009px;top:157px" width="23" height="21" viewBox="0 0 23 21" fill="none"><path d="M10 5 H1 M4.5 1.5 L1 5 L4.5 8.5" stroke="#4aa3f0" stroke-width="1.4"/><text x="13" y="9" font-size="10" fill="#c8c8c8" font-family="Liberation Sans">0</text><text x="6" y="20" font-size="10" fill="#c8c8c8" font-family="Liberation Sans">.00</text></svg><svg class="a" style="left:1041px;top:157px" width="23" height="21" viewBox="0 0 23 21" fill="none"><text x="5" y="9" font-size="10" fill="#c8c8c8" font-family="Liberation Sans">.00</text><path d="M2 15 H11 M7.5 11.5 L11 15 L7.5 18.5" stroke="#4aa3f0" stroke-width="1.4"/><text x="12" y="20" font-size="10" fill="#c8c8c8" font-family="Liberation Sans">.0</text></svg><svg class="a" style="left:1110px;top:111px" width="38" height="30" viewBox="0 0 38 30" fill="none"><rect x="7.5" y="1.5" width="16" height="9" fill="#e81b1b"/><rect x="7.5" y="10" width="11" height="8" fill="#2a6fd0" stroke="#5fb0f0" stroke-width="1"/><rect x="7.5" y="18" width="18" height="10" fill="#e81b1b"/><rect x="1.5" y="1.5" width="35" height="26.5" stroke="#b8b8b8" stroke-width="1.6"/><path d="M1.5 10 H36.5 M1.5 18.3 H36.5 M7.7 1.5 V28 M24 1.5 V28 M30 1.5 V28" stroke="#b8b8b8" stroke-width="1.2"/></svg><svg class="a" style="left:1089px;top:143.0px;overflow:visible" width="78" height="28"><text x="0" y="21.0" textLength="78" lengthAdjust="spacingAndGlyphs" font-family="Liberation Sans" font-size="14" fill="#ececec" font-weight="normal">การจัดรูปแบบ</text></svg><svg class="a" style="left:1090px;top:163.0px;overflow:visible" width="63" height="28"><text x="0" y="21.0" textLength="63" lengthAdjust="spacingAndGlyphs" font-family="Liberation Sans" font-size="14" fill="#ececec" font-weight="normal">ตามเงื่อนไข</text></svg><svg class="a" style="left:1157px;top:174px" width="10" height="8" viewBox="0 0 10 8" fill="none"><path d="M1 2.4 L5 6.0 L9 2.4" stroke="#d0d0d0" stroke-width="1.4"/></svg><svg class="a" style="left:1192px;top:111px" width="40" height="36" viewBox="0 0 40 36" fill="none"><rect x="13" y="10" width="23.5" height="18" fill="#1e64c0"/><rect x="1.5" y="1.5" width="35" height="26.5" stroke="#b8b8b8" stroke-width="1.6"/><path d="M1.5 10 H36.5 M1.5 18.5 H36.5 M13 1.5 V28 M25 1.5 V28" stroke="#b8b8b8" stroke-width="1.2"/><path d="M38.5 10 L22 28" stroke="#b0b0b0" stroke-width="3.2" stroke-linecap="round"/><path d="M38.5 10 L22 28" stroke="#292929" stroke-width="1.2" stroke-linecap="round"/><path d="M10 32 C14 33 19 33 22 30 C24 27 22 25 19 26 C16 27 15 31 10 32 Z" fill="#3a8ee8" stroke="#7cc0f8" stroke-width="1"/></svg><svg class="a" style="left:1182px;top:143.0px;overflow:visible" width="56" height="28"><text x="0" y="21.0" textLength="56" lengthAdjust="spacingAndGlyphs" font-family="Liberation Sans" font-size="14" fill="#ececec" font-weight="normal">จัดรูปแบบ</text></svg><svg class="a" style="left:1175px;top:163.0px;overflow:visible" width="56" height="28"><text x="0" y="21.0" textLength="56" lengthAdjust="spacingAndGlyphs" font-family="Liberation Sans" font-size="14" fill="#ececec" font-weight="normal">เป็นตาราง</text></svg><svg class="a" style="left:1235px;top:174px" width="10" height="8" viewBox="0 0 10 8" fill="none"><path d="M1 2.4 L5 6.0 L9 2.4" stroke="#d0d0d0" stroke-width="1.4"/></svg><svg class="a" style="left:1259px;top:111px" width="40" height="36" viewBox="0 0 40 36" fill="none"><rect x="7" y="6" width="22" height="14" fill="#1e64c0" stroke="#6cb8f8" stroke-width="1"/><rect x="1.5" y="1.5" width="35" height="26.5" stroke="#b8b8b8" stroke-width="1.6"/><path d="M1.5 6 H36.5 M1.5 23 H36.5 M7 1.5 V28 M29 1.5 V6" stroke="#b8b8b8" stroke-width="1.2"/><path d="M38.5 10 L22 28" stroke="#b0b0b0" stroke-width="3.2" stroke-linecap="round"/><path d="M38.5 10 L22 28" stroke="#292929" stroke-width="1.2" stroke-linecap="round"/><path d="M10 32 C14 33 19 33 22 30 C24 27 22 25 19 26 C16 27 15 31 10 32 Z" fill="#3a8ee8" stroke="#7cc0f8" stroke-width="1"/></svg><svg class="a" style="left:1262px;top:143.0px;overflow:visible" width="30" height="28"><text x="0" y="21.0" textLength="30" lengthAdjust="spacingAndGlyphs" font-family="Liberation Sans" font-size="14" fill="#ececec" font-weight="normal">สไตล์</text></svg><svg class="a" style="left:1256px;top:163.0px;overflow:visible" width="28" height="28"><text x="0" y="21.0" textLength="28" lengthAdjust="spacingAndGlyphs" font-family="Liberation Sans" font-size="14" fill="#ececec" font-weight="normal">เซลล์</text></svg><svg class="a" style="left:1286px;top:174px" width="10" height="8" viewBox="0 0 10 8" fill="none"><path d="M1 2.4 L5 6.0 L9 2.4" stroke="#d0d0d0" stroke-width="1.4"/></svg><svg class="a" style="left:1328px;top:111px" width="42" height="30" viewBox="0 0 42 30" fill="none"><rect x="3.5" y="1.5" width="35" height="26.5" stroke="#b8b8b8" stroke-width="1.6"/><path d="M3.5 10.5 H38.5 M3.5 18.5 H38.5 M15 1.5 V28 M27 1.5 V28" stroke="#b8b8b8" stroke-width="1.2"/><rect x="2.5" y="10" width="6" height="9" fill="#292929"/><rect x="8" y="10.5" width="32" height="8.5" fill="#1e64c0" stroke="#6cb8f8" stroke-width="1"/><path d="M15 14.8 H4 M8.5 8.5 L2 14.8 L8.5 21" stroke="#4aa3f0" stroke-width="1.3"/></svg><svg class="a" style="left:1334px;top:145.0px;overflow:visible" width="29" height="28"><text x="0" y="21.0" textLength="29" lengthAdjust="spacingAndGlyphs" font-family="Liberation Sans" font-size="14" fill="#ececec" font-weight="normal">แทรก</text></svg><svg class="a" style="left:1343px;top:176px" width="10" height="8" viewBox="0 0 10 8" fill="none"><path d="M1 2.4 L5 6.0 L9 2.4" stroke="#d0d0d0" stroke-width="1.4"/></svg><svg class="a" style="left:1384px;top:111px" width="40" height="30" viewBox="0 0 40 30" fill="none"><rect x="1.5" y="1.5" width="35" height="26.5" stroke="#b8b8b8" stroke-width="1.6"/><path d="M1.5 10.5 H36.5 M1.5 18.5 H36.5 M13 1.5 V28 M24.5 1.5 V28" stroke="#b8b8b8" stroke-width="1.2"/><rect x="0" y="10" width="6" height="9" fill="#292929"/><rect x="32" y="10" width="8" height="9" fill="#292929"/><path d="M6 10.5 H24 L28 14.8 L24 19 H6 Z" fill="#1e64c0" stroke="#6cb8f8" stroke-width="1"/><path d="M24 8 L38 23 M38 8 L24 23" stroke="#f05a22" stroke-width="1.6"/></svg><svg class="a" style="left:1394px;top:145.0px;overflow:visible" width="16" height="28"><text x="0" y="21.0" textLength="16" lengthAdjust="spacingAndGlyphs" font-family="Liberation Sans" font-size="14" fill="#ececec" font-weight="normal">ลบ</text></svg><svg class="a" style="left:1397px;top:176px" width="10" height="8" viewBox="0 0 10 8" fill="none"><path d="M1 2.4 L5 6.0 L9 2.4" stroke="#d0d0d0" stroke-width="1.4"/></svg><svg class="a" style="left:1438px;top:106px" width="38" height="35" viewBox="0 0 38 35" fill="none"><path d="M9 2.5 H28 M9 0.5 V4.5 M28 0.5 V4.5" stroke="#4aa3f0" stroke-width="1.4"/><rect x="1.5" y="6.5" width="35" height="26.5" stroke="#b8b8b8" stroke-width="1.6"/><path d="M1.5 15.5 H36.5 M1.5 24 H36.5 M11 6.5 V33 M27 6.5 V33" stroke="#b8b8b8" stroke-width="1.2"/><rect x="11" y="15.5" width="16" height="8.5" fill="#1e64c0" stroke="#6cb8f8" stroke-width="1"/></svg><svg class="a" style="left:1436px;top:143.0px;overflow:visible" width="40" height="28"><text x="0" y="21.0" textLength="40" lengthAdjust="spacingAndGlyphs" font-family="Liberation Sans" font-size="14" fill="#ececec" font-weight="normal">รูปแบบ</text></svg><svg class="a" style="left:1451px;top:174px" width="10" height="8" viewBox="0 0 10 8" fill="none"><path d="M1 2.4 L5 6.0 L9 2.4" stroke="#d0d0d0" stroke-width="1.4"/></svg><svg class="a" style="left:1508px;top:107px" width="20" height="20" viewBox="0 0 20 20" fill="none"><path d="M18 4 V1.5 H2 L10 9.5 L2 17.5 H18 V15" stroke="#c8c8c8" stroke-width="1.5" stroke-linejoin="miter"/></svg><svg class="a" style="left:1533px;top:102.0px;overflow:visible" width="84" height="28"><text x="0" y="21.0" textLength="84" lengthAdjust="spacingAndGlyphs" font-family="Liberation Sans" font-size="14" fill="#ececec" font-weight="normal">ผลรวมอัตโนมัติ</text></svg><svg class="a" style="left:1632px;top:113px" width="10" height="8" viewBox="0 0 10 8" fill="none"><path d="M1 2.4 L5 6.0 L9 2.4" stroke="#d0d0d0" stroke-width="1.4"/></svg><svg class="a" style="left:1507px;top:139px" width="22" height="20" viewBox="0 0 22 20" fill="none"><rect x="1" y="1" width="19" height="17" stroke="#b8b8b8" stroke-width="1.3"/><path d="M1 4 H20" stroke="#b8b8b8" stroke-width="1.3"/><path d="M10.5 6 V15 M7 11.5 L10.5 15 L14 11.5" stroke="#4aa3f0" stroke-width="1.4"/></svg><svg class="a" style="left:1533px;top:134.0px;overflow:visible" width="20" height="28"><text x="0" y="21.0" textLength="20" lengthAdjust="spacingAndGlyphs" font-family="Liberation Sans" font-size="14" fill="#ececec" font-weight="normal">เติม</text></svg><svg class="a" style="left:1558px;top:145px" width="10" height="8" viewBox="0 0 10 8" fill="none"><path d="M1 2.4 L5 6.0 L9 2.4" stroke="#d0d0d0" stroke-width="1.4"/></svg><svg class="a" style="left:1507px;top:171px" width="22" height="20" viewBox="0 0 22 20" fill="none"><path d="M2 13 L12 3 L20 9 L10 19 Z" stroke="#e88ae8" stroke-width="1.5" fill="#3a2a4a"/><rect x="5" y="11" width="5" height="4" fill="#b070e0"/></svg><svg class="a" style="left:1533px;top:166.0px;overflow:visible" width="20" height="28"><text x="0" y="21.0" textLength="20" lengthAdjust="spacingAndGlyphs" font-family="Liberation Sans" font-size="14" fill="#ececec" font-weight="normal">ล้าง</text></svg><svg class="a" style="left:1558px;top:177px" width="10" height="8" viewBox="0 0 10 8" fill="none"><path d="M1 2.4 L5 6.0 L9 2.4" stroke="#d0d0d0" stroke-width="1.4"/></svg><svg class="a" style="left:1665px;top:106px" width="42" height="38" viewBox="0 0 42 38" fill="none"><text x="1" y="18" font-size="17" fill="#4aa3f0" font-family="Liberation Sans">A</text><text x="1" y="36" font-size="17" fill="#c8c8c8" font-family="Liberation Sans">Z</text><path d="M17 11.5 H38 L30 21 V31 H25 V21 Z" stroke="#c8c8c8" stroke-width="1.5" stroke-linejoin="round"/></svg><svg class="a" style="left:1656px;top:143.0px;overflow:visible" width="56" height="28"><text x="0" y="21.0" textLength="56" lengthAdjust="spacingAndGlyphs" font-family="Liberation Sans" font-size="14" fill="#ececec" font-weight="normal">เรียงลำดับ</text></svg><svg class="a" style="left:1653px;top:163.0px;overflow:visible" width="48" height="28"><text x="0" y="21.0" textLength="48" lengthAdjust="spacingAndGlyphs" font-family="Liberation Sans" font-size="14" fill="#ececec" font-weight="normal">และกรอง</text></svg><svg class="a" style="left:1706px;top:174px" width="10" height="8" viewBox="0 0 10 8" fill="none"><path d="M1 2.4 L5 6.0 L9 2.4" stroke="#d0d0d0" stroke-width="1.4"/></svg><svg class="a" style="left:1729px;top:106px" width="40" height="40" viewBox="0 0 40 40" fill="none"><circle cx="25" cy="15" r="12" stroke="#c8c8c8" stroke-width="1.6"/><path d="M16 24 L2 38" stroke="#c8c8c8" stroke-width="1.6"/></svg><svg class="a" style="left:1723px;top:143.0px;overflow:visible" width="54" height="28"><text x="0" y="21.0" textLength="54" lengthAdjust="spacingAndGlyphs" font-family="Liberation Sans" font-size="14" fill="#ececec" font-weight="normal">ค้นหาและ</text></svg><svg class="a" style="left:1729px;top:163.0px;overflow:visible" width="29" height="28"><text x="0" y="21.0" textLength="29" lengthAdjust="spacingAndGlyphs" font-family="Liberation Sans" font-size="14" fill="#ececec" font-weight="normal">เลือก</text></svg><svg class="a" style="left:1761px;top:174px" width="10" height="8" viewBox="0 0 10 8" fill="none"><path d="M1 2.4 L5 6.0 L9 2.4" stroke="#d0d0d0" stroke-width="1.4"/></svg><svg class="a" style="left:1886px;top:200px" width="12" height="10" viewBox="0 0 12 10" fill="none"><path d="M1 3.0 L6 7.5 L11 3.0" stroke="#e0e0e0" stroke-width="1.6"/></svg><div class="a" style="left:0px;top:222px;width:1920px;height:47px;background:#0a0a0a;border-radius:0px;"></div><div class="a" style="left:10px;top:232px;width:127px;height:29px;background:#262626;border:1px solid #5c5c5c;border-radius:5px;"></div><div class="a" style="left:17px;top:229px;height:36px;line-height:36px;font-size:18px;color:#ffffff;font-weight:normal;white-space:nowrap;letter-spacing:-0.3px">AJ645</div><svg class="a" style="left:118px;top:241px" width="12" height="10" viewBox="0 0 12 10" fill="none"><path d="M1 3.0 L6 7.5 L11 3.0" stroke="#ffffff" stroke-width="2"/></svg><div class="a" style="left:148px;top:241px;width:3px;height:3px;background:#bdbdbd;border-radius:0px;"></div><div class="a" style="left:148px;top:246px;width:3px;height:3px;background:#bdbdbd;border-radius:0px;"></div><div class="a" style="left:148px;top:251px;width:3px;height:3px;background:#bdbdbd;border-radius:0px;"></div><div class="a" style="left:162px;top:232px;width:91px;height:29px;background:#262626;border:1px solid #5c5c5c;border-radius:5px;"></div><svg class="a" style="left:170px;top:239px" width="17" height="16" viewBox="0 0 17 16" fill="none"><path d="M1 1 L15 15 M15 1 L1 15" stroke="#7c7c7c" stroke-width="1.4"/></svg><svg class="a" style="left:196px;top:239px" width="22" height="16" viewBox="0 0 22 16" fill="none"><path d="M1 8 L7 14 L21 2" stroke="#7c7c7c" stroke-width="1.4"/></svg><div class="a" style="left:229px;top:227px;height:38px;line-height:38px;font-size:19px;color:#c8c8c8;font-weight:normal;white-space:nowrap;font-family:"Liberation Serif",serif"><i>fx</i></div><div class="a" style="left:259px;top:232px;width:1651px;height:29px;background:#262626;border:1px solid #5c5c5c;border-radius:5px;"></div><svg class="a" style="left:1892px;top:240px" width="12" height="10" viewBox="0 0 12 10" fill="none"><path d="M1 3.0 L6 7.5 L11 3.0" stroke="#ffffff" stroke-width="2"/></svg><div class="a" style="left:0px;top:965px;width:1920px;height:29px;background:#262626;border-radius:0px;"></div><div class="a" style="left:0px;top:965px;width:1894px;height:1px;background:#6a6a6a;border-radius:0px;"></div><div class="a" style="left:0px;top:993px;width:1920px;height:1px;background:#3a3a3a;border-radius:0px;"></div><svg class="a" style="left:24px;top:972px" width="12" height="14" viewBox="0 0 12 14" fill="none"><path d="M9 2 L3 7 L9 12 Z" fill="#d0d0d0"/></svg><svg class="a" style="left:52px;top:972px" width="12" height="14" viewBox="0 0 12 14" fill="none"><path d="M3 2 L9 7 L3 12 Z" fill="#d0d0d0"/></svg><div class="a" style="left:80px;top:980px;width:2.5px;height:2.5px;background:#f0f0f0;border-radius:0px;"></div><div class="a" style="left:85px;top:980px;width:2.5px;height:2.5px;background:#f0f0f0;border-radius:0px;"></div><div class="a" style="left:90px;top:980px;width:2.5px;height:2.5px;background:#f0f0f0;border-radius:0px;"></div><div class="a" style="left:100px;top:966px;width:61px;height:24px;background:linear-gradient(#f4faf0,#dcefd0);border-radius:0px;"></div><div class="a" style="left:100px;top:988px;width:61px;height:2px;background:#3f9a4a;border-radius:0px;"></div><div class="a" style="left:-20px;width:300px;text-align:center;top:960px;height:34px;line-height:34px;font-size:17px;color:#1f7a37;font-weight:bold;white-space:nowrap;">RPH</div><div class="a" style="left:162px;top:967px;width:58px;height:22px;background:#ff0000;border-radius:0px;"></div><div class="a" style="left:41px;width:300px;text-align:center;top:960px;height:34px;line-height:34px;font-size:17px;color:#ffffff;font-weight:normal;white-space:nowrap;">TQM</div><div class="a" style="left:224px;top:967px;width:97px;height:22px;background:#ff0000;border-radius:0px;"></div><div class="a" style="left:122px;width:300px;text-align:center;top:960px;height:34px;line-height:34px;font-size:17px;color:#ffffff;font-weight:normal;white-space:nowrap;">DOHOME</div><div class="a" style="left:325px;top:967px;width:73px;height:22px;background:#ff0000;border-radius:0px;"></div><div class="a" style="left:211px;width:300px;text-align:center;top:960px;height:34px;line-height:34px;font-size:17px;color:#ffffff;font-weight:normal;white-space:nowrap;">CPALL</div><div class="a" style="left:402px;top:967px;width:53px;height:22px;background:#ff0000;border-radius:0px;"></div><div class="a" style="left:278px;width:300px;text-align:center;top:960px;height:34px;line-height:34px;font-size:17px;color:#ffffff;font-weight:normal;white-space:nowrap;">SVT</div><div class="a" style="left:460px;top:967px;width:60px;height:22px;background:#ff0000;border-radius:0px;"></div><div class="a" style="left:340px;width:300px;text-align:center;top:960px;height:34px;line-height:34px;font-size:17px;color:#ffffff;font-weight:normal;white-space:nowrap;">SPVI</div><div class="a" style="left:524px;top:967px;width:54px;height:22px;background:#ff0000;border-radius:0px;"></div><div class="a" style="left:401px;width:300px;text-align:center;top:960px;height:34px;line-height:34px;font-size:17px;color:#ffffff;font-weight:normal;white-space:nowrap;">TNP</div><div class="a" style="left:583px;top:967px;width:80px;height:22px;background:#ff0000;border-radius:0px;"></div><div class="a" style="left:473px;width:300px;text-align:center;top:960px;height:34px;line-height:34px;font-size:17px;color:#ffffff;font-weight:normal;white-space:nowrap;">JUBILE</div><div class="a" style="left:669px;top:967px;width:68px;height:22px;background:#ff0000;border-radius:0px;"></div><div class="a" style="left:553px;width:300px;text-align:center;top:960px;height:34px;line-height:34px;font-size:17px;color:#ffffff;font-weight:normal;white-space:nowrap;">MEGA</div><div class="a" style="left:742px;top:967px;width:64px;height:22px;background:#ff0000;border-radius:0px;"></div><div class="a" style="left:624px;width:300px;text-align:center;top:960px;height:34px;line-height:34px;font-size:17px;color:#ffffff;font-weight:normal;white-space:nowrap;">TACC</div><div class="a" style="left:810px;top:967px;width:52px;height:22px;background:#ff0000;border-radius:0px;"></div><div class="a" style="left:686px;width:300px;text-align:center;top:960px;height:34px;line-height:34px;font-size:17px;color:#ffffff;font-weight:normal;white-space:nowrap;">BJC</div><div class="a" style="left:867px;top:967px;width:83px;height:22px;background:#ff0000;border-radius:0px;"></div><div class="a" style="left:758px;width:300px;text-align:center;top:960px;height:34px;line-height:34px;font-size:17px;color:#ffffff;font-weight:normal;white-space:nowrap;">MAKRO</div><div class="a" style="left:954px;top:967px;width:89px;height:22px;background:#ff0000;border-radius:0px;"></div><div class="a" style="left:848px;width:300px;text-align:center;top:960px;height:34px;line-height:34px;font-size:17px;color:#ffffff;font-weight:normal;white-space:nowrap;">GLOBAL</div><div class="a" style="left:1048px;top:967px;width:32px;height:22px;background:#ff0000;border-radius:0px;"></div><div class="a" style="left:1048px;top:967px;width:32px;height:22px;overflow:hidden"><div style="position:absolute;left:14px;top:0;line-height:22px;font-size:17px;color:#fff">MC</div></div><div class="a" style="left:222px;top:969px;width:1px;height:18px;background:#777;border-radius:0px;"></div><div class="a" style="left:323px;top:969px;width:1px;height:18px;background:#777;border-radius:0px;"></div><div class="a" style="left:400px;top:969px;width:1px;height:18px;background:#777;border-radius:0px;"></div><div class="a" style="left:458px;top:969px;width:1px;height:18px;background:#777;border-radius:0px;"></div><div class="a" style="left:522px;top:969px;width:1px;height:18px;background:#777;border-radius:0px;"></div><div class="a" style="left:581px;top:969px;width:1px;height:18px;background:#777;border-radius:0px;"></div><div class="a" style="left:667px;top:969px;width:1px;height:18px;background:#777;border-radius:0px;"></div><div class="a" style="left:740px;top:969px;width:1px;height:18px;background:#777;border-radius:0px;"></div><div class="a" style="left:808px;top:969px;width:1px;height:18px;background:#777;border-radius:0px;"></div><div class="a" style="left:865px;top:969px;width:1px;height:18px;background:#777;border-radius:0px;"></div><div class="a" style="left:952px;top:969px;width:1px;height:18px;background:#777;border-radius:0px;"></div><div class="a" style="left:1046px;top:969px;width:1px;height:18px;background:#777;border-radius:0px;"></div><div class="a" style="left:1088px;top:980px;width:2px;height:2px;background:#f0f0f0;border-radius:0px;"></div><div class="a" style="left:1093px;top:980px;width:2px;height:2px;background:#f0f0f0;border-radius:0px;"></div><div class="a" style="left:1098px;top:980px;width:2px;height:2px;background:#f0f0f0;border-radius:0px;"></div><svg class="a" style="left:1111px;top:969px" width="22" height="22" viewBox="0 0 22 22" fill="none"><circle cx="11" cy="11" r="9.6" stroke="#e8e8e8" stroke-width="1.4"/><path d="M11 6 V16 M6 11 H16" stroke="#f4f4f4" stroke-width="2"/></svg><div class="a" style="left:1136px;top:966px;width:28px;height:27px;background:#0a0a0a;border-radius:0px;"></div><div class="a" style="left:1148px;top:973px;width:3px;height:3px;background:#e0e0e0;border-radius:0px;"></div><div class="a" style="left:1148px;top:978px;width:3px;height:3px;background:#e0e0e0;border-radius:0px;"></div><div class="a" style="left:1148px;top:983px;width:3px;height:3px;background:#e0e0e0;border-radius:0px;"></div><div class="a" style="left:1164px;top:967px;width:732px;height:21px;background:#141414;border-radius:10px;"></div><svg class="a" style="left:1170px;top:972px" width="10" height="14" viewBox="0 0 10 14" fill="none"><path d="M8 2 L2 7 L8 12 Z" fill="#a0a0a0"/></svg><div class="a" style="left:1266px;top:973px;width:139px;height:13px;background:#9a9a9a;border-radius:7px;"></div><svg class="a" style="left:1881px;top:972px" width="10" height="14" viewBox="0 0 10 14" fill="none"><path d="M2 2 L8 7 L2 12 Z" fill="#a0a0a0"/></svg><div class="a" style="left:1894px;top:269px;width:26px;height:698px;background:#0a0a0a;border-radius:0px;"></div><div class="a" style="left:1896px;top:269px;width:22px;height:698px;background:#141414;border-radius:10px;"></div><div class="a" style="left:1896px;top:967px;width:24px;height:26px;background:#262626;border-radius:0px;"></div><svg class="a" style="left:1899px;top:274px" width="16" height="12" viewBox="0 0 16 12" fill="none"><path d="M2.5 10 L8 2.5 L13.5 10 Z" fill="#a0a0a0" stroke="#a0a0a0" stroke-linejoin="round"/></svg><div class="a" style="left:1901px;top:851px;width:12px;height:43px;background:#9a9a9a;border-radius:6px;"></div><svg class="a" style="left:1899px;top:951px" width="16" height="12" viewBox="0 0 16 12" fill="none"><path d="M2.5 2 L8 9.5 L13.5 2 Z" fill="#a0a0a0" stroke="#a0a0a0" stroke-linejoin="round"/></svg><div class="a" style="left:0px;top:994px;width:1920px;height:26px;background:#141414;border-radius:0px;"></div><svg class="a" style="left:9px;top:992.0px;overflow:visible" width="28" height="28"><text x="0" y="21.0" textLength="28" lengthAdjust="spacingAndGlyphs" font-family="Liberation Sans" font-size="14" fill="#e8e8e8" font-weight="normal">พร้อม</text></svg><svg class="a" style="left:62px;top:996px" width="24" height="22" viewBox="0 0 24 22" fill="none"><circle cx="12" cy="4" r="2.6" stroke="#e0e0e0" stroke-width="1.4"/><path d="M2 8 C7 10 17 10 22 8 M12 10 V14 L7 21 M12 14 L15 17" stroke="#e0e0e0" stroke-width="1.4"/><path d="M14 15 L21 21 M21 15 L14 21" stroke="#e0e0e0" stroke-width="1.4"/></svg><svg class="a" style="left:84px;top:992.0px;overflow:visible" width="226" height="28"><text x="0" y="21.0" textLength="226" lengthAdjust="spacingAndGlyphs" font-family="Liberation Sans" font-size="14" fill="#e8e8e8" font-weight="normal">การช่วยสำหรับการเข้าถึง: โปรดศึกษาคำแนะนำ</text></svg><div class="a" style="left:1555px;top:993px;width:50px;height:27px;background:#262626;border-radius:0px;"></div><svg class="a" style="left:1570px;top:997px" width="20" height="20" viewBox="0 0 20 20" fill="none"><path d="M1 1 H19 V19 H1 Z M7 1 V19 M13 1 V19 M1 7 H19 M1 13 H19" stroke="#d8d8d8" stroke-width="1.4"/></svg><svg class="a" style="left:1620px;top:997px" width="20" height="20" viewBox="0 0 20 20" fill="none"><rect x="1" y="1" width="18" height="18" stroke="#d8d8d8" stroke-width="1.4"/><rect x="5" y="4" width="10" height="12" stroke="#d8d8d8" stroke-width="1.1"/><path d="M7 7 H13 M7 10 H13 M7 13 H13" stroke="#d8d8d8" stroke-width="1"/></svg><svg class="a" style="left:1670px;top:997px" width="20" height="20" viewBox="0 0 20 20" fill="none"><rect x="1" y="1" width="18" height="18" stroke="#d8d8d8" stroke-width="1.4"/><path d="M7 1 V10 H12 V1" stroke="#d8d8d8" stroke-width="1.4"/></svg><div class="a" style="left:1710px;top:1006px;width:10px;height:1px;background:#e0e0e0;border-radius:0px;"></div><div class="a" style="left:1729px;top:1006px;width:125px;height:1px;background:#8a8a8a;border-radius:0px;"></div><div class="a" style="left:1763px;top:999px;width:5px;height:15px;background:#c8c8c8;border-radius:1px;"></div><div class="a" style="left:1790px;top:1003px;width:1px;height:7px;background:#8a8a8a;border-radius:0px;"></div><svg class="a" style="left:1857px;top:1001px" width="12" height="12" viewBox="0 0 12 12" fill="none"><path d="M6 0 V12 M0 6 H12" stroke="#e0e0e0" stroke-width="1.3"/></svg><div class="a" style="left:1885px;top:992px;height:28px;line-height:28px;font-size:14px;color:#e8e8e8;font-weight:normal;white-space:nowrap;">60%</div><div class="a" style="left:0px;top:1020px;width:1920px;height:60px;background:linear-gradient(90deg,#1c1b22,#1f1c24 60%,#1c1b20);border-radius:0px;"></div><div class="a" style="left:0px;top:1020px;width:1920px;height:1px;background:#2a2a2a;border-radius:0px;"></div><svg class="a" style="left:14px;top:1035px" width="32" height="30" viewBox="0 0 32 30" fill="none"><circle cx="13" cy="14" r="12" fill="#9a9a9a"/><path d="M10 25 H27 A5 5 0 0 0 27 15 A7 7 0 0 0 14 17 A4 4 0 0 0 10 25 Z" fill="#f0f0f0"/></svg><svg class="a" style="left:603px;top:1035px" width="31" height="31" viewBox="0 0 31 31" fill="none"><rect x="0" y="0" width="14.5" height="14.5" fill="#39b4f0"/><rect x="16" y="0" width="14.5" height="14.5" fill="#39b4f0"/><rect x="0" y="16" width="14.5" height="14.5" fill="#1f8fe0"/><rect x="16" y="16" width="14.5" height="14.5" fill="#1f8fe0"/></svg><div class="a" style="left:651px;top:1030px;width:124px;height:39px;background:#2c2a30;border-radius:20px;"></div><svg class="a" style="left:679px;top:1041px" width="18" height="18" viewBox="0 0 18 18" fill="none"><circle cx="7.5" cy="7.5" r="6" stroke="#fff" stroke-width="1.8"/><path d="M12 12 L17 17" stroke="#fff" stroke-width="2"/></svg><div class="a" style="left:704px;top:1035px;height:30px;line-height:30px;font-size:15px;color:#ffffff;font-weight:normal;white-space:nowrap;">Search</div><svg class="a" style="left:792px;top:1035px" width="32" height="31" viewBox="0 0 32 31" fill="none"><rect x="1" y="10" width="20" height="18" rx="2" fill="#6a6a70"/><rect x="10" y="2" width="20" height="18" rx="2" fill="#e8e6ec"/></svg><svg class="a" style="left:847px;top:1035px" width="32" height="31" viewBox="0 0 32 31" fill="none"><circle cx="16" cy="15" r="14" fill="#5b6fd6"/><path d="M5 27 L9 22" stroke="#5b6fd6" stroke-width="4"/><rect x="9" y="10" width="11" height="10" rx="2" fill="#fff"/><path d="M20 13 L25 10 V20 L20 17 Z" fill="#fff"/></svg><svg class="a" style="left:901px;top:1034px" width="33" height="32" viewBox="0 0 33 32" fill="none"><path d="M1 6 H12 L15 9 H32 V28 H1 Z" fill="#f0b429"/><rect x="1" y="11" width="31" height="17" fill="#ffd35a"/><rect x="9" y="23" width="15" height="5" fill="#2b7fd6"/></svg><div class="a" style="left:913px;top:1071px;width:10px;height:2px;background:#9a9a9a;border-radius:1px;"></div><svg class="a" style="left:957px;top:1034px" width="32" height="32" viewBox="0 0 32 32" fill="none"><circle cx="16" cy="16" r="15" fill="#1e8ad6"/><path d="M4 18 C6 8 24 6 28 14 C29 19 24 21 20 19 C26 17 22 10 15 12 C8 14 8 24 16 28 C9 29 3 24 4 18 Z" fill="#5fdc7a"/><path d="M15 12 C22 10 26 17 20 19 C16 21 11 18 13 15" fill="#0c59a4"/></svg><svg class="a" style="left:1012px;top:1035px" width="31" height="31" viewBox="0 0 31 31" fill="none"><circle cx="15.5" cy="15.5" r="15" fill="#1b3a6b"/><circle cx="20" cy="12" r="5" stroke="#fff" stroke-width="2"/><circle cx="10" cy="20" r="3.5" fill="#fff"/><path d="M1 17 L10 20 L17 14" stroke="#fff" stroke-width="2"/></svg><svg class="a" style="left:1067px;top:1033px" width="31" height="33" viewBox="0 0 31 33" fill="none"><path d="M10 7 A5.5 5.5 0 0 1 21 7" stroke="#29a0f0" stroke-width="2"/><rect x="1" y="7" width="29" height="25" rx="3" fill="#f4f4f4"/><rect x="9" y="12" width="6" height="6" fill="#f25022"/><rect x="16" y="12" width="6" height="6" fill="#7fba00"/><rect x="9" y="19" width="6" height="6" fill="#00a4ef"/><rect x="16" y="19" width="6" height="6" fill="#ffb900"/></svg><svg class="a" style="left:1122px;top:1035px" width="32" height="31" viewBox="0 0 32 31" fill="none"><rect x="0" y="0" width="32" height="31" fill="#3a2a9a"/><rect x="16" y="0" width="16" height="31" fill="#c02060"/><circle cx="16" cy="15" r="9" stroke="#fff" stroke-width="2"/><path d="M12 20 V12 A4 4 0 0 1 20 12" stroke="#fff" stroke-width="2"/></svg><svg class="a" style="left:1177px;top:1035px" width="31" height="31" viewBox="0 0 31 31" fill="none"><rect x="0" y="0" width="31" height="31" rx="3" fill="#1e8f3e"/><circle cx="15.5" cy="15.5" r="11" stroke="#fff" stroke-width="2"/><path d="M9 8 C13 11 18 16 22 23 M22 8 C18 11 13 16 9 23" stroke="#fff" stroke-width="2.5"/></svg><svg class="a" style="left:1232px;top:1034px" width="32" height="32" viewBox="0 0 32 32" fill="none"><circle cx="16" cy="16" r="15" fill="#db4437"/><path d="M16 16 L29 9 A15 15 0 0 1 21 30 Z" fill="#f4c20d"/><path d="M16 16 L21 30 A15 15 0 0 1 3 9 Z" fill="#0f9d58"/><circle cx="16" cy="16" r="7" fill="#fff"/><circle cx="16" cy="16" r="5.5" fill="#4285f4"/></svg><div class="a" style="left:1278px;top:1025px;width:50px;height:49px;background:#2e2c33;border-radius:5px;"></div><svg class="a" style="left:1288px;top:1035px" width="31" height="30" viewBox="0 0 31 30" fill="none"><rect x="8" y="1" width="22" height="28" rx="2" fill="#21a366"/><rect x="8" y="1" width="22" height="9" fill="#33c481"/><rect x="8" y="20" width="22" height="9" fill="#185c37"/><rect x="1" y="7" width="16" height="16" rx="2" fill="#107c41"/><path d="M5 11 L13 19 M13 11 L5 19" stroke="#fff" stroke-width="2"/></svg><div class="a" style="left:1294px;top:1071px;width:18px;height:3px;background:#ff9a3c;border-radius:2px;"></div><svg class="a" style="left:1614px;top:1043px" width="18" height="12" viewBox="0 0 18 12" fill="none"><path d="M2 10 L9 3 L16 10" stroke="#f0f0f0" stroke-width="1.5"/></svg><div class="a" style="left:1652px;top:1035px;height:30px;line-height:30px;font-size:15px;color:#ffffff;font-weight:normal;white-space:nowrap;">ENG</div><svg class="a" style="left:1703px;top:1041px" width="22" height="17" viewBox="0 0 22 17" fill="none"><path d="M1 6 A14 14 0 0 1 21 6 M4 9.5 A9.5 9.5 0 0 1 18 9.5 M7 13 A5 5 0 0 1 15 13" stroke="#fff" stroke-width="1.6"/><circle cx="11" cy="15.5" r="1.6" fill="#fff"/></svg><svg class="a" style="left:1733px;top:1040px" width="22" height="20" viewBox="0 0 22 20" fill="none"><path d="M2 7 H6 L11 2 V18 L6 13 H2 Z" stroke="#fff" stroke-width="1.5" stroke-linejoin="round"/><path d="M14 6 A5 5 0 0 1 14 14 M17 3 A9 9 0 0 1 17 17" stroke="#fff" stroke-width="1.5"/></svg><svg class="a" style="left:1763px;top:1042px" width="24" height="15" viewBox="0 0 24 15" fill="none"><rect x="1" y="1" width="19" height="13" rx="3" stroke="#fff" stroke-width="1.5"/><rect x="4" y="4" width="12" height="7" rx="1" fill="#fff"/><path d="M22 5 V10" stroke="#fff" stroke-width="2"/></svg><div class="a" style="left:1780px;width:86px;top:1029px;line-height:20px;font-size:15px;color:#fff;text-align:right">8:49<br>8/2/2566</div><svg class="a" style="left:1875px;top:1039px" width="22" height="22" viewBox="0 0 22 22" fill="none"><circle cx="11" cy="11" r="10.5" fill="#e8874a"/><text x="11" y="15.5" font-size="12" fill="#111" text-anchor="middle" font-family="Liberation Sans">3</text></svg>
</body></html>
